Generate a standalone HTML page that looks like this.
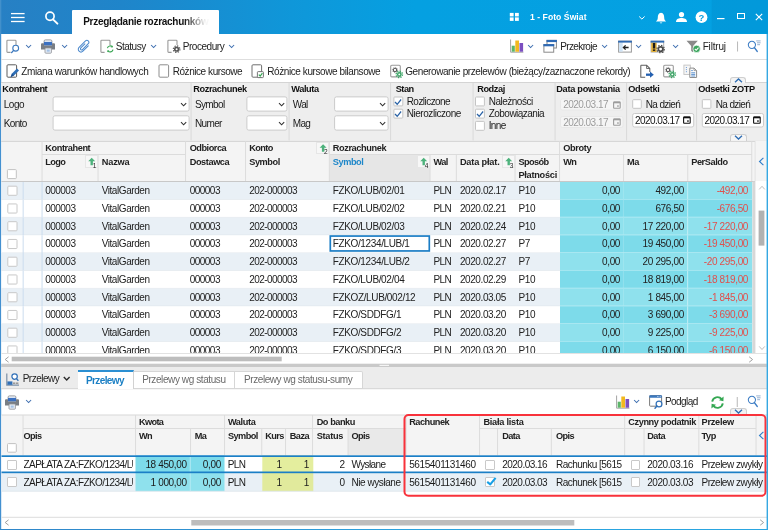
<!DOCTYPE html>
<html lang="pl"><head><meta charset="utf-8"><title>Przeglądanie rozrachunków</title>
<style>
html,body{margin:0;padding:0;}
body{width:768px;height:530px;overflow:hidden;position:relative;background:#fff;font-family:"Liberation Sans", sans-serif;font-size:10px;}
#app{position:absolute;left:0;top:0;width:768px;height:530px;overflow:hidden;background:#fff;will-change:transform;}
.a{position:absolute;box-sizing:border-box;}
.t{position:absolute;white-space:nowrap;line-height:14px;height:14px;}
</style></head>
<body>
<div id="app">
<div class="a" style="left:0px;top:0px;width:768px;height:34px;background:linear-gradient(90deg,#2780c4 0%,#1f85ca 16%,#0f97d9 38%,#05a0e1 54%,#03a1e2 100%);"></div>
<svg class="a" style="left:711px;top:0px" width="57" height="34"><rect x="0.70" y="0.00" width="56.30" height="33.60" fill="rgba(0,50,120,0.075)"/></svg>
<div class="a" style="left:72px;top:10.2px;width:146.5px;height:24px;background:#fff;border-radius:1px 1px 0 0;"></div>
<span class="t" id="t0" style="font-size:10px;color:#111;letter-spacing:-0.282px;font-weight:bold;left:83.20px;top:15px;">Przeglądanie rozrachunków</span>
<div class="a" style="left:184px;top:11px;width:34.5px;height:22px;background:linear-gradient(90deg,rgba(255,255,255,0) 0%,rgba(255,255,255,0.96) 62%,#fff 100%);"></div>
<svg class="a" style="left:11px;top:12px" width="14" height="3"><rect x="0.00" y="0.95" width="13.60" height="1.30" fill="#fff"/></svg>
<svg class="a" style="left:11px;top:16px" width="14" height="3"><rect x="0.00" y="0.85" width="13.60" height="1.30" fill="#fff"/></svg>
<svg class="a" style="left:11px;top:20px" width="14" height="3"><rect x="0.00" y="0.85" width="13.60" height="1.30" fill="#fff"/></svg>
<svg class="a" style="left:0px;top:0px" width="2" height="34"><rect x="0.00" y="0.00" width="1.30" height="34.00" fill="rgba(255,255,255,0.13)"/></svg>
<svg class="a" style="left:42px;top:10px" width="18" height="16" viewBox="0 0 18 16"><circle cx="8" cy="6.3" r="4.1" fill="none" stroke="#fff" stroke-width="1.7"/><path d="M11 9.4 L15.4 13.6" stroke="#fff" stroke-width="2" stroke-linecap="round"/></svg>
<svg class="a" style="left:509px;top:12px" width="5" height="5"><rect x="0.80" y="0.90" width="3.80" height="3.50" fill="#fff"/></svg>
<svg class="a" style="left:515px;top:12px" width="4" height="5"><rect x="0.00" y="0.90" width="3.80" height="3.50" fill="#fff"/></svg>
<svg class="a" style="left:509px;top:17px" width="5" height="4"><rect x="0.80" y="0.40" width="3.80" height="3.50" fill="#fff"/></svg>
<svg class="a" style="left:515px;top:17px" width="4" height="4"><rect x="0.00" y="0.40" width="3.80" height="3.50" fill="#fff"/></svg>
<span class="t" id="t1" style="font-size:8.6px;color:#fff;letter-spacing:0.049px;font-weight:bold;left:530.00px;top:10px;">1 - Foto Świat</span>
<svg class="a" style="left:638px;top:14.5px" width="8" height="6" viewBox="0 0 8 6"><path d="M1.2 1.5 L3.9 4.1 L6.6 1.5" fill="none" stroke="#fff" stroke-width="1"/></svg>
<svg class="a" style="left:655px;top:12px" width="12" height="13" viewBox="0 0 12 13"><path d="M6 0.8 C3.4 1.2 2.8 3.4 2.8 5.5 C2.8 7.8 2 8.6 0.9 9.6 L11.1 9.6 C10 8.6 9.2 7.8 9.2 5.5 C9.2 3.4 8.6 1.2 6 0.8 Z" fill="#fff"/><path d="M4.7 10.4 A1.4 1.4 0 0 0 7.3 10.4 Z" fill="#fff"/></svg>
<svg class="a" style="left:675px;top:11px" width="13" height="12" viewBox="0 0 13 12"><circle cx="6.5" cy="3.6" r="2.6" fill="#fff"/><path d="M1 11 C1 7.8 4 7 6.5 7 C9 7 12 7.8 12 11 Z" fill="#fff"/></svg>
<svg class="a" style="left:695px;top:11px" width="13" height="13" viewBox="0 0 13 13"><circle cx="6.5" cy="6.2" r="5.9" fill="#fff"/><text x="6.5" y="9.6" font-family="Liberation Sans, sans-serif" font-size="9.5" font-weight="bold" fill="#0a9fe0" text-anchor="middle">?</text></svg>
<svg class="a" style="left:717px;top:18px" width="8" height="2"><rect x="0.00" y="0.00" width="7.50" height="1.20" fill="#fff"/></svg>
<div class="a" style="left:736.5px;top:12.8px;width:8px;height:6.6px;border:1.2px solid #fff;"></div>
<svg class="a" style="left:755px;top:13px" width="8" height="8" viewBox="0 0 8 8"><path d="M0.8 0.8 L7.2 7.2 M7.2 0.8 L0.8 7.2" stroke="#fff" stroke-width="1.1"/></svg>
<svg class="a" style="left:0px;top:34px" width="2" height="496"><rect x="0.00" y="0.00" width="1.20" height="496.00" fill="#4390d0"/></svg>
<svg class="a" style="left:1px;top:59px" width="767" height="1"><rect x="0.00" y="0.00" width="767.00" height="1.00" fill="#dedede"/></svg>
<svg class="a" style="left:5.6px;top:39px" width="15" height="15" viewBox="0 0 15 15"><path d="M0.9 2 Q0.9 1.2 1.7 1.2 L9.2 1.2 Q10 1.2 10 2 L10 6 M0.9 2 L0.9 12.6 Q0.9 13.4 1.7 13.4 L4.6 13.4" fill="none" stroke="#9a9a9a" stroke-width="1.1"/><circle cx="9.7" cy="9.2" r="2.9" fill="#fff" stroke="#3b78be" stroke-width="1.1"/><path d="M7.6 11.4 L5.6 13.6" stroke="#3b78be" stroke-width="1.4" stroke-linecap="round"/></svg>
<svg class="a" style="left:24.8px;top:44px" width="8" height="5" viewBox="0 0 8 5"><path d="M1.1 1 L3.6 3.5 L6.1 1" fill="none" stroke="#3d6eb0" stroke-width="1.05"/></svg>
<svg class="a" style="left:40.9px;top:39.4px" width="15" height="15" viewBox="0 0 15 15"><rect x="3.1" y="0.9" width="7.8" height="4" rx="1.3" fill="#eef3f9" stroke="#8d9196" stroke-width="0.9"/><rect x="3" y="2.9" width="8" height="3.7" fill="#3b70c0"/><path d="M0 5.3 Q0 4.3 1 4.3 L3 4.3 L3 6.6 L11 6.6 L11 4.3 L13 4.3 Q14 4.3 14 5.3 L14 10.6 L0 10.6 Z" fill="#797e84"/><rect x="4" y="9" width="6.4" height="5.2" rx="0.8" fill="#e8eef6" stroke="#8d9196" stroke-width="0.8"/><rect x="5.7" y="10.5" width="3" height="2.2" fill="#a4c2e6"/></svg>
<svg class="a" style="left:60.6px;top:44px" width="8" height="5" viewBox="0 0 8 5"><path d="M1.1 1 L3.6 3.5 L6.1 1" fill="none" stroke="#3d6eb0" stroke-width="1.05"/></svg>
<svg class="a" style="left:76px;top:39px" width="16" height="15" viewBox="0 0 16 15"><g transform="translate(7.8 7.5) rotate(45)"><path d="M2.7 -3.6 L2.7 4 A2.7 2.7 0 0 1 -2.7 4 L-2.7 -5.1 A1.95 1.95 0 0 1 1.2 -5.1 L1.2 3.1 A1.15 1.15 0 0 1 -1.1 3.1 L-1.1 -2.6" fill="none" stroke="#4d8acd" stroke-width="1.05" stroke-linecap="round"/></g></svg>
<svg class="a" style="left:99.8px;top:39px" width="15" height="15" viewBox="0 0 15 15"><path d="M0.9 2 Q0.9 1.2 1.7 1.2 L9.2 1.2 Q10 1.2 10 2 L10 6 M0.9 2 L0.9 12.6 Q0.9 13.4 1.7 13.4 L4.6 13.4" fill="none" stroke="#9a9a9a" stroke-width="1.1"/><path d="M7.4 9.2 A2.9 2.9 0 0 1 12.5 8 M13 10.6 A2.9 2.9 0 0 1 7.9 11.8" fill="none" stroke="#3aa655" stroke-width="1.2"/><path d="M12.9 6.5 L12.6 8.6 L10.6 8.2 Z M7.1 13.3 L7.4 11.2 L9.4 11.6 Z" fill="#3aa655"/></svg>
<span class="t" id="t2" style="font-size:10px;color:#222;letter-spacing:-0.477px;left:115.70px;top:40px;">Statusy</span>
<svg class="a" style="left:150px;top:44px" width="8" height="5" viewBox="0 0 8 5"><path d="M1.1 1 L3.6 3.5 L6.1 1" fill="none" stroke="#3d6eb0" stroke-width="1.05"/></svg>
<svg class="a" style="left:166.6px;top:39px" width="15" height="15" viewBox="0 0 15 15"><path d="M0.9 2 Q0.9 1.2 1.7 1.2 L9.2 1.2 Q10 1.2 10 2 L10 6 M0.9 2 L0.9 12.6 Q0.9 13.4 1.7 13.4 L4.6 13.4" fill="none" stroke="#9a9a9a" stroke-width="1.1"/><circle cx="9.6" cy="10.2" r="2.6" fill="#555"/><circle cx="9.6" cy="10.2" r="3.3" fill="none" stroke="#555" stroke-width="1.2" stroke-dasharray="1.3 1.3"/><circle cx="9.6" cy="10.2" r="1" fill="#fff"/></svg>
<span class="t" id="t3" style="font-size:10px;color:#222;letter-spacing:-0.447px;left:182.70px;top:40px;">Procedury</span>
<svg class="a" style="left:228.4px;top:44px" width="8" height="5" viewBox="0 0 8 5"><path d="M1.1 1 L3.6 3.5 L6.1 1" fill="none" stroke="#3d6eb0" stroke-width="1.05"/></svg>
<svg class="a" style="left:510px;top:39.3px" width="14" height="14" viewBox="0 0 14 14"><path d="M0.6 0.5 L0.6 13.2 L13.4 13.2" fill="none" stroke="#a4a4a4" stroke-width="1"/><rect x="1.7" y="6.7" width="3.1" height="6" fill="#5db56a"/><rect x="5.3" y="1.5" width="3.7" height="11.2" fill="#f2b81f"/><rect x="9.5" y="4" width="3.6" height="8.7" fill="#7b4fc0"/></svg>
<svg class="a" style="left:526.8px;top:44px" width="8" height="5" viewBox="0 0 8 5"><path d="M1.1 1 L3.6 3.5 L6.1 1" fill="none" stroke="#3d6eb0" stroke-width="1.05"/></svg>
<svg class="a" style="left:543px;top:39px" width="15" height="14" viewBox="0 0 15 14"><rect x="4" y="1.4" width="9.4" height="7.6" fill="#fff" stroke="#8a8a8a" stroke-width="1"/><rect x="3.5" y="0.9" width="10.4" height="2.2" fill="#2f6ab4"/><rect x="0.9" y="5.6" width="9.8" height="7.6" fill="#fff" stroke="#8a8a8a" stroke-width="1"/><rect x="0.4" y="5.1" width="10.8" height="2.2" fill="#2f6ab4"/></svg>
<span class="t" id="t4" style="font-size:10px;color:#222;letter-spacing:-0.620px;left:560.20px;top:40px;">Przekroje</span>
<svg class="a" style="left:601.3px;top:44px" width="8" height="5" viewBox="0 0 8 5"><path d="M1.1 1 L3.6 3.5 L6.1 1" fill="none" stroke="#3d6eb0" stroke-width="1.05"/></svg>
<svg class="a" style="left:618px;top:40px" width="15" height="13" viewBox="0 0 15 13"><rect x="0.6" y="1.2" width="12.8" height="10.9" fill="#fff" stroke="#9a9a9a" stroke-width="1"/><rect x="1.1" y="2.4" width="3.6" height="9.2" fill="#cfe3f5"/><rect x="0.1" y="0.7" width="13.8" height="1.9" fill="#2f6ab4"/><path d="M10.6 7.5 L5.6 7.5 M7.6 5.4 L5.4 7.5 L7.6 9.6" fill="none" stroke="#222" stroke-width="1.3"/></svg>
<svg class="a" style="left:635px;top:44px" width="8" height="5" viewBox="0 0 8 5"><path d="M1.1 1 L3.6 3.5 L6.1 1" fill="none" stroke="#3d6eb0" stroke-width="1.05"/></svg>
<svg class="a" style="left:650px;top:40px" width="16" height="14" viewBox="0 0 16 14"><rect x="1.1" y="1.2" width="12.6" height="10.9" fill="#fff" stroke="#a8a8a8" stroke-width="0.9"/><rect x="1.2" y="2.4" width="5.5" height="9.6" fill="#e2b13c"/><rect x="0.6" y="0.7" width="13.6" height="1.9" fill="#2f6ab4"/><rect x="2.9" y="3" width="2.3" height="5.5" fill="#1a1a1a"/><rect x="2.9" y="9.4" width="2.3" height="1.5" fill="#1a1a1a"/><circle cx="10.6" cy="9.1" r="2.3" fill="#fff" stroke="#4a4a4a" stroke-width="1.7"/><circle cx="10.6" cy="9.1" r="3.7" fill="none" stroke="#4a4a4a" stroke-width="1.1" stroke-dasharray="1.45 1.45"/></svg>
<svg class="a" style="left:672px;top:44px" width="8" height="5" viewBox="0 0 8 5"><path d="M1.1 1 L3.6 3.5 L6.1 1" fill="none" stroke="#3d6eb0" stroke-width="1.05"/></svg>
<svg class="a" style="left:686px;top:40px" width="16" height="14" viewBox="0 0 16 14"><path d="M0.5 0.8 L11.8 0.8 L7.1 5.9 L7.1 12.2 L5.2 11 L5.2 5.9 Z" fill="#8a8a8a"/><circle cx="10.6" cy="8.9" r="3.7" fill="#3aa55d" stroke="#fff" stroke-width="0.7"/><path d="M8.8 8.9 L10.2 10.3 L12.5 7.6" fill="none" stroke="#fff" stroke-width="1.1"/></svg>
<span class="t" id="t5" style="font-size:10px;color:#222;letter-spacing:-0.192px;left:702.70px;top:40px;">Filtruj</span>
<svg class="a" style="left:737px;top:41px" width="2" height="11"><rect x="0.05" y="0.50" width="1.00" height="10.00" fill="#b8b8b8"/></svg>
<svg class="a" style="left:747px;top:40px" width="15" height="13" viewBox="0 0 15 13"><circle cx="4.9" cy="4.8" r="3.6" fill="#fff" stroke="#3b7cc4" stroke-width="1.05"/><path d="M7.4 7.6 L10.2 11.4" stroke="#3b7cc4" stroke-width="1.5" stroke-linecap="round"/><path d="M9.2 0.9 L13.6 0.9 M10 2.8 L13.6 2.8 M10.2 4.7 L13 4.7" stroke="#8aa7c9" stroke-width="0.9"/></svg>
<svg class="a" style="left:1px;top:82px" width="767" height="1"><rect x="0.00" y="0.00" width="767.00" height="1.00" fill="#d4d4d4"/></svg>
<svg class="a" style="left:5.6px;top:64.4px" width="14" height="15" viewBox="0 0 14 15"><rect x="1" y="0.8" width="9.6" height="12.4" rx="1" fill="#fff" stroke="#5c5c5c" stroke-width="1"/><path d="M5 12.6 L6 9.6 L11 4.6 L13 6.6 L8 11.6 Z" fill="#2f6fb7"/><path d="M4.4 13.4 L6 9.6 L8 11.6 Z" fill="#1d4f8f"/></svg>
<span class="t" id="t6" style="font-size:10px;color:#222;letter-spacing:-0.369px;left:21.20px;top:65px;">Zmiana warunków handlowych</span>
<svg class="a" style="left:157.6px;top:64.4px" width="14" height="15" viewBox="0 0 14 15"><rect x="1" y="0.8" width="9.6" height="12.4" rx="1" fill="#fff" stroke="#8e8e8e" stroke-width="1"/></svg>
<span class="t" id="t7" style="font-size:10px;color:#222;letter-spacing:-0.440px;left:172.70px;top:65px;">Różnice kursowe</span>
<svg class="a" style="left:251.4px;top:64.4px" width="14" height="15" viewBox="0 0 14 15"><rect x="1" y="0.8" width="9.6" height="12.4" rx="1" fill="#fff" stroke="#6e6e6e" stroke-width="1"/><rect x="6.4" y="7.6" width="6" height="6" rx="0.8" fill="#fff" stroke="#666" stroke-width="0.9"/><path d="M7.8 10.6 L9.2 12 L11.4 9.2" fill="none" stroke="#35a853" stroke-width="1.2"/></svg>
<span class="t" id="t8" style="font-size:10px;color:#222;letter-spacing:-0.413px;left:267.20px;top:65px;">Różnice kursowe bilansowe</span>
<svg class="a" style="left:390.1px;top:64px" width="15" height="15" viewBox="0 0 15 15"><rect x="0.7" y="1.3" width="9.6" height="11.6" rx="1.1" fill="#fff" stroke="#9a9a9a" stroke-width="1.1"/><circle cx="5" cy="6" r="1.7" fill="none" stroke="#555" stroke-width="1.1"/><circle cx="5" cy="6" r="2.6" fill="none" stroke="#666" stroke-width="0.8" stroke-dasharray="0.9 1.15"/><circle cx="9.3" cy="10.4" r="2.4" fill="#3aa565"/><circle cx="9.3" cy="10.4" r="3.2" fill="none" stroke="#3aa565" stroke-width="1.3" stroke-dasharray="1.3 1.2"/><circle cx="9.3" cy="10.4" r="0.95" fill="#fff"/></svg>
<span class="t" id="t9" style="font-size:10px;color:#222;letter-spacing:-0.401px;left:405.20px;top:65px;">Generowanie przelewów (bieżący/zaznaczone rekordy)</span>
<svg class="a" style="left:640px;top:64px" width="15" height="15" viewBox="0 0 15 15"><path d="M0.8 1.3 L6.6 1.3 L9.8 4.5 L9.8 8 M0.8 1.3 L0.8 13.2 L5.2 13.2" fill="none" stroke="#5e5e5e" stroke-width="1.05"/><path d="M6.6 1.3 L6.6 4.5 L9.8 4.5" fill="none" stroke="#5e5e5e" stroke-width="0.9"/><path d="M6 10.7 L11.4 10.7" stroke="#2460b0" stroke-width="2.3"/><path d="M10 7.6 L13.8 10.7 L10 13.8 Z" fill="#2460b0"/></svg>
<svg class="a" style="left:663px;top:64px" width="15" height="15" viewBox="0 0 15 15"><rect x="0.7" y="1.3" width="9.6" height="11.6" rx="1.1" fill="#fff" stroke="#9a9a9a" stroke-width="1.1"/><circle cx="5" cy="6" r="1.7" fill="none" stroke="#555" stroke-width="1.1"/><circle cx="5" cy="6" r="2.6" fill="none" stroke="#666" stroke-width="0.8" stroke-dasharray="0.9 1.15"/><circle cx="9.3" cy="10.4" r="2.4" fill="#3aa565"/><circle cx="9.3" cy="10.4" r="3.2" fill="none" stroke="#3aa565" stroke-width="1.3" stroke-dasharray="1.3 1.2"/><circle cx="9.3" cy="10.4" r="0.95" fill="#fff"/></svg>
<svg class="a" style="left:683px;top:64px" width="15" height="15" viewBox="0 0 15 15"><rect x="0.9" y="1.1" width="6.4" height="9.4" fill="#f6f6f6" stroke="#c4c4c4" stroke-width="0.9"/><path d="M3.4 3 L3.4 9" stroke="#6d9bd4" stroke-width="1" stroke-dasharray="1 1.1"/><path d="M6.8 4.1 L11 4.1 L13.6 6.6 L13.6 13.5 L6.8 13.5 Z" fill="#fff" stroke="#8e8e8e" stroke-width="1"/><path d="M11 4.1 L11 6.6 L13.6 6.6" fill="none" stroke="#8e8e8e" stroke-width="0.8"/><path d="M8.2 8.8 L12.2 8.8 M8.2 10.4 L12.2 10.4 M8.2 12 L12.2 12" stroke="#4d86c8" stroke-width="0.9"/><path d="M8.2 6.6 L9.8 6.6" stroke="#4d86c8" stroke-width="0.9"/></svg>
<div class="a" style="left:730px;top:76.5px;width:16px;height:8px;background:#f4f4f4;border:1px solid #cfcfcf;border-radius:3px 3px 0 0;border-bottom:none;"></div>
<svg class="a" style="left:733.5px;top:78px" width="9" height="5" viewBox="0 0 9 5"><path d="M1 4.2 L4.5 1 L8 4.2" fill="none" stroke="#2d6cb3" stroke-width="1.3"/></svg>
<svg class="a" style="left:1px;top:83px" width="767" height="58"><rect x="0.20" y="0.00" width="766.00" height="58.00" fill="#eeeeee"/></svg>
<svg class="a" style="left:190px;top:83px" width="2" height="58"><rect x="0.55" y="0.00" width="1.00" height="57.50" fill="#dadada"/></svg>
<svg class="a" style="left:288px;top:83px" width="2" height="58"><rect x="0.55" y="0.00" width="1.00" height="57.50" fill="#dadada"/></svg>
<svg class="a" style="left:390px;top:83px" width="2" height="58"><rect x="0.05" y="0.00" width="1.00" height="57.50" fill="#dadada"/></svg>
<svg class="a" style="left:472px;top:83px" width="2" height="58"><rect x="0.55" y="0.00" width="1.00" height="57.50" fill="#dadada"/></svg>
<svg class="a" style="left:554px;top:83px" width="2" height="58"><rect x="0.55" y="0.00" width="1.00" height="57.50" fill="#dadada"/></svg>
<svg class="a" style="left:626px;top:83px" width="2" height="58"><rect x="0.05" y="0.00" width="1.00" height="57.50" fill="#dadada"/></svg>
<svg class="a" style="left:696px;top:83px" width="2" height="58"><rect x="0.05" y="0.00" width="1.00" height="57.50" fill="#dadada"/></svg>
<span class="t" id="t10" style="font-size:9.2px;color:#111;letter-spacing:-0.389px;font-weight:bold;left:2.20px;top:82px;">Kontrahent</span>
<span class="t" id="t11" style="font-size:9.2px;color:#111;letter-spacing:-0.370px;font-weight:bold;left:193.20px;top:82px;">Rozrachunek</span>
<span class="t" id="t12" style="font-size:9.2px;color:#111;letter-spacing:-0.356px;font-weight:bold;left:291.20px;top:82px;">Waluta</span>
<span class="t" id="t13" style="font-size:9.2px;color:#111;letter-spacing:-0.474px;font-weight:bold;left:395.70px;top:82px;">Stan</span>
<span class="t" id="t14" style="font-size:9.2px;color:#111;letter-spacing:-0.425px;font-weight:bold;left:477.20px;top:82px;">Rodzaj</span>
<span class="t" id="t15" style="font-size:9.2px;color:#111;letter-spacing:-0.261px;font-weight:bold;left:556.20px;top:82px;">Data powstania</span>
<span class="t" id="t16" style="font-size:9.2px;color:#111;letter-spacing:-0.367px;font-weight:bold;left:628.20px;top:82px;">Odsetki</span>
<span class="t" id="t17" style="font-size:9.2px;color:#111;letter-spacing:-0.342px;font-weight:bold;left:698.20px;top:82px;">Odsetki ZOTP</span>
<svg class="a" style="left:52px;top:96px" width="139" height="17"><rect x="1.10" y="0.90" width="136.00" height="14.20" rx="1.8" fill="#fff" stroke="#cbcbcb" stroke-width="1"/></svg>
<svg class="a" style="left:180.0px;top:101.9px" width="8" height="5" viewBox="0 0 8 5"><path d="M1 1.2 L3.6 3.8 L6.2 1.2" fill="none" stroke="#333" stroke-width="1.1"/></svg>
<svg class="a" style="left:52px;top:115px" width="139" height="17"><rect x="1.10" y="0.80" width="136.00" height="14.30" rx="1.8" fill="#fff" stroke="#cbcbcb" stroke-width="1"/></svg>
<svg class="a" style="left:180.0px;top:120.8px" width="8" height="5" viewBox="0 0 8 5"><path d="M1 1.2 L3.6 3.8 L6.2 1.2" fill="none" stroke="#333" stroke-width="1.1"/></svg>
<span class="t" id="t18" style="font-size:10px;color:#1a1a1a;letter-spacing:-0.417px;left:3.70px;top:98px;">Logo</span>
<span class="t" id="t19" style="font-size:10px;color:#1a1a1a;letter-spacing:-0.620px;left:3.70px;top:117px;">Konto</span>
<svg class="a" style="left:246px;top:96px" width="43" height="17"><rect x="0.90" y="0.90" width="40.00" height="14.20" rx="1.8" fill="#fff" stroke="#cbcbcb" stroke-width="1"/></svg>
<svg class="a" style="left:277.79999999999995px;top:101.9px" width="8" height="5" viewBox="0 0 8 5"><path d="M1 1.2 L3.6 3.8 L6.2 1.2" fill="none" stroke="#333" stroke-width="1.1"/></svg>
<svg class="a" style="left:246px;top:115px" width="43" height="17"><rect x="0.90" y="0.80" width="40.00" height="14.30" rx="1.8" fill="#fff" stroke="#cbcbcb" stroke-width="1"/></svg>
<svg class="a" style="left:277.79999999999995px;top:120.8px" width="8" height="5" viewBox="0 0 8 5"><path d="M1 1.2 L3.6 3.8 L6.2 1.2" fill="none" stroke="#333" stroke-width="1.1"/></svg>
<span class="t" id="t20" style="font-size:10px;color:#1a1a1a;letter-spacing:-0.620px;left:194.90px;top:98px;">Symbol</span>
<span class="t" id="t21" style="font-size:10px;color:#1a1a1a;letter-spacing:-0.620px;left:194.90px;top:117px;">Numer</span>
<svg class="a" style="left:334px;top:96px" width="56" height="17"><rect x="0.60" y="0.90" width="53.50" height="14.20" rx="1.8" fill="#fff" stroke="#cbcbcb" stroke-width="1"/></svg>
<svg class="a" style="left:379.0px;top:101.9px" width="8" height="5" viewBox="0 0 8 5"><path d="M1 1.2 L3.6 3.8 L6.2 1.2" fill="none" stroke="#333" stroke-width="1.1"/></svg>
<svg class="a" style="left:334px;top:115px" width="56" height="17"><rect x="0.60" y="0.80" width="53.50" height="14.30" rx="1.8" fill="#fff" stroke="#cbcbcb" stroke-width="1"/></svg>
<svg class="a" style="left:379.0px;top:120.8px" width="8" height="5" viewBox="0 0 8 5"><path d="M1 1.2 L3.6 3.8 L6.2 1.2" fill="none" stroke="#333" stroke-width="1.1"/></svg>
<span class="t" id="t22" style="font-size:10px;color:#1a1a1a;letter-spacing:-0.620px;left:292.70px;top:98px;">Wal</span>
<span class="t" id="t23" style="font-size:10px;color:#1a1a1a;letter-spacing:-0.620px;left:292.70px;top:117px;">Mag</span>
<svg class="a" style="left:393px;top:96px" width="12" height="12"><rect x="0.90" y="1.00" width="8.90" height="8.90" rx="0.8" fill="#fff" stroke="#c4c4c4" stroke-width="1"/></svg>
<svg class="a" style="left:393.4px;top:96.5px" width="10" height="10" viewBox="0 0 10 10"><path d="M2 5 L4.2 7.3 L8.1 2.5" fill="none" stroke="#2b63a6" stroke-width="1.25"/></svg>
<svg class="a" style="left:393px;top:108px" width="12" height="12"><rect x="0.90" y="1.20" width="8.90" height="8.90" rx="0.8" fill="#fff" stroke="#c4c4c4" stroke-width="1"/></svg>
<svg class="a" style="left:393.4px;top:108.7px" width="10" height="10" viewBox="0 0 10 10"><path d="M2 5 L4.2 7.3 L8.1 2.5" fill="none" stroke="#2b63a6" stroke-width="1.25"/></svg>
<span class="t" id="t24" style="font-size:10px;color:#1a1a1a;letter-spacing:-0.547px;left:406.70px;top:95px;">Rozliczone</span>
<span class="t" id="t25" style="font-size:10px;color:#1a1a1a;letter-spacing:-0.444px;left:406.70px;top:107px;">Nierozliczone</span>
<svg class="a" style="left:475px;top:96px" width="11" height="12"><rect x="0.50" y="1.00" width="8.90" height="8.90" rx="0.8" fill="#fff" stroke="#c4c4c4" stroke-width="1"/></svg>
<svg class="a" style="left:475px;top:108px" width="11" height="12"><rect x="0.50" y="1.20" width="8.90" height="8.90" rx="0.8" fill="#fff" stroke="#c4c4c4" stroke-width="1"/></svg>
<svg class="a" style="left:475px;top:108.7px" width="10" height="10" viewBox="0 0 10 10"><path d="M2 5 L4.2 7.3 L8.1 2.5" fill="none" stroke="#2b63a6" stroke-width="1.25"/></svg>
<svg class="a" style="left:475px;top:120px" width="11" height="12"><rect x="0.50" y="1.40" width="8.90" height="8.90" rx="0.8" fill="#fff" stroke="#c4c4c4" stroke-width="1"/></svg>
<span class="t" id="t26" style="font-size:10px;color:#1a1a1a;letter-spacing:-0.491px;left:488.70px;top:95px;">Należności</span>
<span class="t" id="t27" style="font-size:10px;color:#1a1a1a;letter-spacing:-0.520px;left:488.70px;top:107px;">Zobowiązania</span>
<span class="t" id="t28" style="font-size:10px;color:#1a1a1a;letter-spacing:-0.620px;left:488.70px;top:119px;">Inne</span>
<svg class="a" style="left:560px;top:98px" width="65" height="14"><rect x="0.50" y="1.00" width="62.50" height="11.00" rx="1.8" fill="#f5f5f5" stroke="#e8e8e8" stroke-width="1"/></svg>
<span class="t" id="t29" style="font-size:10px;color:#9c9c9c;letter-spacing:-0.529px;left:563.20px;top:98px;">2020.03.17</span>
<svg class="a" style="left:613.0px;top:100.5px" width="8" height="8" viewBox="0 0 8 8"><rect x="0.6" y="1" width="6.6" height="6.2" rx="0.7" fill="none" stroke="#9c9c9c" stroke-width="1.1"/><rect x="0.6" y="0.6" width="6.6" height="1.7" fill="#9c9c9c"/><rect x="4.2" y="4.3" width="1.5" height="1.5" fill="#9c9c9c"/></svg>
<svg class="a" style="left:560px;top:116px" width="65" height="13"><rect x="0.50" y="0.50" width="62.50" height="11.00" rx="1.8" fill="#f5f5f5" stroke="#e8e8e8" stroke-width="1"/></svg>
<span class="t" id="t30" style="font-size:10px;color:#9c9c9c;letter-spacing:-0.529px;left:563.20px;top:116px;">2020.03.17</span>
<svg class="a" style="left:613.0px;top:118.0px" width="8" height="8" viewBox="0 0 8 8"><rect x="0.6" y="1" width="6.6" height="6.2" rx="0.7" fill="none" stroke="#9c9c9c" stroke-width="1.1"/><rect x="0.6" y="0.6" width="6.6" height="1.7" fill="#9c9c9c"/><rect x="4.2" y="4.3" width="1.5" height="1.5" fill="#9c9c9c"/></svg>
<svg class="a" style="left:632px;top:99px" width="11" height="11"><rect x="0.70" y="0.70" width="8.60" height="8.60" rx="0.8" fill="#fff" stroke="#c4c4c4" stroke-width="1"/></svg>
<span class="t" id="t31" style="font-size:10px;color:#1a1a1a;letter-spacing:-0.620px;left:645.70px;top:98px;">Na dzień</span>
<svg class="a" style="left:632px;top:113px" width="64" height="16"><rect x="0.70" y="0.50" width="61.00" height="13.50" rx="1.8" fill="#fff" stroke="#cbcbcb" stroke-width="1"/></svg>
<span class="t" id="t32" style="font-size:10px;color:#111;letter-spacing:-0.529px;left:634.90px;top:114px;">2020.03.17</span>
<svg class="a" style="left:682.9000000000001px;top:116.35px" width="8" height="8" viewBox="0 0 8 8"><rect x="0.6" y="1" width="6.6" height="6.2" rx="0.7" fill="none" stroke="#111" stroke-width="1.1"/><rect x="0.6" y="0.6" width="6.6" height="1.7" fill="#111"/><rect x="4.2" y="4.3" width="1.5" height="1.5" fill="#111"/></svg>
<svg class="a" style="left:701px;top:99px" width="12" height="11"><rect x="1.30" y="0.70" width="8.60" height="8.60" rx="0.8" fill="#fff" stroke="#c4c4c4" stroke-width="1"/></svg>
<span class="t" id="t33" style="font-size:10px;color:#1a1a1a;letter-spacing:-0.620px;left:715.70px;top:98px;">Na dzień</span>
<svg class="a" style="left:701px;top:113px" width="64" height="16"><rect x="1.30" y="0.50" width="61.20" height="13.50" rx="1.8" fill="#fff" stroke="#cbcbcb" stroke-width="1"/></svg>
<span class="t" id="t34" style="font-size:10px;color:#111;letter-spacing:-0.529px;left:704.50px;top:114px;">2020.03.17</span>
<svg class="a" style="left:752.7px;top:116.35px" width="8" height="8" viewBox="0 0 8 8"><rect x="0.6" y="1" width="6.6" height="6.2" rx="0.7" fill="none" stroke="#111" stroke-width="1.1"/><rect x="0.6" y="0.6" width="6.6" height="1.7" fill="#111"/><rect x="4.2" y="4.3" width="1.5" height="1.5" fill="#111"/></svg>
<div class="a" style="left:729.5px;top:133.5px;width:17px;height:8px;background:#f6f6f6;border:1px solid #cfcfcf;border-radius:3px 3px 0 0;border-bottom:none;"></div>
<svg class="a" style="left:733.5px;top:135.3px" width="9" height="5" viewBox="0 0 9 5"><path d="M1 0.8 L4.5 4 L8 0.8" fill="none" stroke="#2d6cb3" stroke-width="1.3"/></svg>
<svg class="a" style="left:1px;top:141px" width="755" height="40"><rect x="0.50" y="0.00" width="754.00" height="40.00" fill="#f4f4f4"/></svg>
<svg class="a" style="left:1px;top:140px" width="767" height="2"><rect x="0.20" y="0.90" width="766.00" height="1.00" fill="#d4d4d4"/></svg>
<svg class="a" style="left:329px;top:154px" width="101" height="27"><rect x="0.50" y="0.50" width="100.50" height="26.50" fill="#e6e6e6"/></svg>
<svg class="a" style="left:42px;top:154px" width="144" height="1"><rect x="0.00" y="0.00" width="143.50" height="1.00" fill="#dcdcdc"/></svg>
<svg class="a" style="left:329px;top:154px" width="231" height="1"><rect x="0.50" y="0.00" width="230.00" height="1.00" fill="#dcdcdc"/></svg>
<svg class="a" style="left:560px;top:154px" width="192" height="1"><rect x="0.00" y="0.00" width="192.00" height="1.00" fill="#dcdcdc"/></svg>
<svg class="a" style="left:22px;top:181px" width="2" height="1"><rect x="0.55" y="0.00" width="1.00" height="0.00" fill="#dcdcdc"/></svg>
<svg class="a" style="left:41px;top:141px" width="2" height="40"><rect x="0.55" y="0.00" width="1.00" height="40.00" fill="#dcdcdc"/></svg>
<svg class="a" style="left:97px;top:154px" width="2" height="27"><rect x="0.55" y="0.00" width="1.00" height="27.00" fill="#dcdcdc"/></svg>
<svg class="a" style="left:185px;top:141px" width="2" height="40"><rect x="0.05" y="0.00" width="1.00" height="40.00" fill="#dcdcdc"/></svg>
<svg class="a" style="left:245px;top:141px" width="2" height="40"><rect x="0.05" y="0.00" width="1.00" height="40.00" fill="#dcdcdc"/></svg>
<svg class="a" style="left:328px;top:141px" width="2" height="40"><rect x="0.85" y="0.00" width="1.00" height="40.00" fill="#dcdcdc"/></svg>
<svg class="a" style="left:429px;top:154px" width="2" height="27"><rect x="0.55" y="0.00" width="1.00" height="27.00" fill="#dcdcdc"/></svg>
<svg class="a" style="left:455px;top:154px" width="2" height="27"><rect x="0.85" y="0.00" width="1.00" height="27.00" fill="#dcdcdc"/></svg>
<svg class="a" style="left:514px;top:154px" width="2" height="27"><rect x="0.55" y="0.00" width="1.00" height="27.00" fill="#dcdcdc"/></svg>
<svg class="a" style="left:559px;top:141px" width="2" height="40"><rect x="0.05" y="0.00" width="1.00" height="40.00" fill="#dcdcdc"/></svg>
<svg class="a" style="left:623px;top:154px" width="2" height="27"><rect x="0.05" y="0.00" width="1.00" height="27.00" fill="#dcdcdc"/></svg>
<svg class="a" style="left:687px;top:154px" width="2" height="27"><rect x="0.25" y="0.00" width="1.00" height="27.00" fill="#dcdcdc"/></svg>
<svg class="a" style="left:751px;top:141px" width="2" height="40"><rect x="0.25" y="0.00" width="1.00" height="40.00" fill="#dcdcdc"/></svg>
<svg class="a" style="left:754px;top:141px" width="2" height="40"><rect x="0.85" y="0.00" width="1.00" height="40.00" fill="#dcdcdc"/></svg>
<svg class="a" style="left:1px;top:181px" width="755" height="1"><rect x="0.50" y="0.00" width="754.00" height="1.00" fill="#c8c8c8"/></svg>
<span class="t" id="t35" style="font-size:9.2px;color:#222;letter-spacing:-0.389px;font-weight:bold;left:45.20px;top:141px;">Kontrahent</span>
<span class="t" id="t36" style="font-size:9.2px;color:#222;letter-spacing:-0.620px;font-weight:bold;left:45.20px;top:155px;">Logo</span>
<span class="t" id="t37" style="font-size:9.2px;color:#222;letter-spacing:-0.152px;font-weight:bold;left:101.70px;top:155px;">Nazwa</span>
<span class="t" id="t38" style="font-size:9.2px;color:#222;letter-spacing:-0.478px;font-weight:bold;left:189.70px;top:141px;">Odbiorca</span>
<span class="t" id="t39" style="font-size:9.2px;color:#222;letter-spacing:-0.415px;font-weight:bold;left:189.70px;top:155px;">Dostawca</span>
<span class="t" id="t40" style="font-size:9.2px;color:#222;letter-spacing:-0.583px;font-weight:bold;left:249.20px;top:141px;">Konto</span>
<span class="t" id="t41" style="font-size:9.2px;color:#222;letter-spacing:-0.438px;font-weight:bold;left:249.20px;top:155px;">Symbol</span>
<span class="t" id="t42" style="font-size:9.2px;color:#222;letter-spacing:-0.370px;font-weight:bold;left:332.70px;top:141px;">Rozrachunek</span>
<span class="t" id="t43" style="font-size:9.2px;color:#1e87c9;letter-spacing:-0.398px;font-weight:bold;left:332.70px;top:155px;">Symbol</span>
<span class="t" id="t44" style="font-size:9.2px;color:#222;letter-spacing:-0.500px;font-weight:bold;left:433.40px;top:155px;">Wal</span>
<span class="t" id="t45" style="font-size:9.2px;color:#222;letter-spacing:-0.173px;font-weight:bold;left:459.90px;top:155px;">Data płat.</span>
<span class="t" id="t46" style="font-size:9.2px;color:#222;letter-spacing:-0.577px;font-weight:bold;left:518.40px;top:155px;">Sposób</span>
<span class="t" id="t47" style="font-size:9.2px;color:#222;letter-spacing:-0.257px;font-weight:bold;left:518.40px;top:168px;">Płatności</span>
<span class="t" id="t48" style="font-size:9.2px;color:#222;letter-spacing:-0.325px;font-weight:bold;left:563.20px;top:141px;">Obroty</span>
<span class="t" id="t49" style="font-size:9.2px;color:#222;letter-spacing:-0.620px;font-weight:bold;left:563.20px;top:155px;">Wn</span>
<span class="t" id="t50" style="font-size:9.2px;color:#222;letter-spacing:-0.266px;font-weight:bold;left:626.90px;top:155px;">Ma</span>
<span class="t" id="t51" style="font-size:9.2px;color:#222;letter-spacing:-0.404px;font-weight:bold;left:691.20px;top:155px;">PerSaldo</span>
<div class="a" style="left:84.5px;top:155.3px;width:13.5px;height:12.7px;background:#f7f7f7;border:1px solid #e6e6e6;"></div>
<svg class="a" style="left:87px;top:157px" width="10" height="10" viewBox="0 0 10 10"><path transform="translate(1.20 0.80)" d="M3.5 0 L7 3.5 L4.7 3.5 L4.7 7.5 L2.3 7.5 L2.3 3.5 L0 3.5 Z" fill="#4db27c"/></svg>
<span class="t" id="t52" style="font-size:6.5px;color:#222;letter-spacing:-0.360px;left:92.70px;top:159px;">1</span>
<div class="a" style="left:315.9px;top:141.8px;width:13.5px;height:12.7px;background:#f7f7f7;border:1px solid #e6e6e6;"></div>
<svg class="a" style="left:318px;top:143px" width="10" height="10" viewBox="0 0 10 10"><path transform="translate(1.60 1.30)" d="M3.5 0 L7 3.5 L4.7 3.5 L4.7 7.5 L2.3 7.5 L2.3 3.5 L0 3.5 Z" fill="#4db27c"/></svg>
<span class="t" id="t53" style="font-size:6.5px;color:#222;letter-spacing:-0.360px;left:324.10px;top:145px;">2</span>
<div class="a" style="left:416.5px;top:155.3px;width:13.5px;height:12.7px;background:#f7f7f7;border:1px solid #e6e6e6;"></div>
<svg class="a" style="left:419px;top:157px" width="10" height="10" viewBox="0 0 10 10"><path transform="translate(1.20 0.80)" d="M3.5 0 L7 3.5 L4.7 3.5 L4.7 7.5 L2.3 7.5 L2.3 3.5 L0 3.5 Z" fill="#4db27c"/></svg>
<span class="t" id="t54" style="font-size:6.5px;color:#222;letter-spacing:-0.360px;left:424.70px;top:159px;">4</span>
<div class="a" style="left:501.5px;top:155.3px;width:13.5px;height:12.7px;background:#f7f7f7;border:1px solid #e6e6e6;"></div>
<svg class="a" style="left:504px;top:157px" width="10" height="10" viewBox="0 0 10 10"><path transform="translate(1.20 0.80)" d="M3.5 0 L7 3.5 L4.7 3.5 L4.7 7.5 L2.3 7.5 L2.3 3.5 L0 3.5 Z" fill="#4db27c"/></svg>
<span class="t" id="t55" style="font-size:6.5px;color:#222;letter-spacing:-0.360px;left:509.70px;top:159px;">3</span>
<svg class="a" style="left:758px;top:156.8px" width="7" height="9" viewBox="0 0 7 9"><path d="M5.4 0.9 L1.5 4.5 L5.4 8.1" fill="none" stroke="#2d7cc8" stroke-width="1.1"/></svg>
<svg class="a" style="left:6px;top:169px" width="12" height="12"><rect x="1.40" y="0.60" width="8.90" height="9.00" rx="0.8" fill="#fff" stroke="#c2c2c2" stroke-width="1"/></svg>
<div class="a" style="left:0;top:181.7px;width:768px;height:171.3px;overflow:hidden;">
<svg class="a" style="left:1px;top:0px" width="559" height="18"><rect x="0.50" y="0.00" width="558.50" height="17.75" fill="#e9f0f6"/></svg>
<svg class="a" style="left:1px;top:17px" width="559" height="2"><rect x="0.50" y="0.15" width="558.50" height="1.00" fill="#dde5ec"/></svg>
<svg class="a" style="left:560px;top:0px" width="193" height="18"><rect x="0.00" y="0.00" width="192.30" height="17.75" fill="#8fe1ed"/></svg>
<svg class="a" style="left:622px;top:0px" width="2" height="18"><rect x="0.95" y="0.00" width="0.80" height="17.75" fill="#a4e6f0"/></svg>
<svg class="a" style="left:687px;top:0px" width="2" height="18"><rect x="0.15" y="0.00" width="1.00" height="17.75" fill="#c4eef5"/></svg>
<svg class="a" style="left:560px;top:16px" width="193" height="2"><rect x="0.00" y="0.95" width="192.30" height="0.90" fill="#b4eaf3"/></svg>
<svg class="a" style="left:22px;top:0px" width="2" height="18"><rect x="0.65" y="0.00" width="1.00" height="17.75" fill="#cbdcee"/></svg>
<svg class="a" style="left:41px;top:0px" width="2" height="18"><rect x="0.55" y="0.00" width="1.00" height="17.75" fill="#cbdcee"/></svg>
<svg class="a" style="left:7px;top:3px" width="12" height="12"><rect x="0.80" y="1.20" width="9.20" height="9.10" rx="0.8" fill="#fff" stroke="#c8c8c8" stroke-width="1"/></svg>
<svg class="a" style="left:1px;top:17px" width="559" height="19"><rect x="0.50" y="0.75" width="558.50" height="17.75" fill="#ffffff"/></svg>
<svg class="a" style="left:1px;top:34px" width="559" height="2"><rect x="0.50" y="0.90" width="558.50" height="1.00" fill="#e6ebf0"/></svg>
<svg class="a" style="left:560px;top:17px" width="193" height="19"><rect x="0.00" y="0.75" width="192.30" height="17.75" fill="#7ddbea"/></svg>
<svg class="a" style="left:622px;top:17px" width="2" height="19"><rect x="0.95" y="0.75" width="0.80" height="17.75" fill="#98e2ee"/></svg>
<svg class="a" style="left:687px;top:17px" width="2" height="19"><rect x="0.15" y="0.75" width="1.00" height="17.75" fill="#c4eef5"/></svg>
<svg class="a" style="left:560px;top:34px" width="193" height="2"><rect x="0.00" y="0.70" width="192.30" height="0.90" fill="#b4eaf3"/></svg>
<svg class="a" style="left:22px;top:17px" width="2" height="19"><rect x="0.65" y="0.75" width="1.00" height="17.75" fill="#cbdcee"/></svg>
<svg class="a" style="left:41px;top:17px" width="2" height="19"><rect x="0.55" y="0.75" width="1.00" height="17.75" fill="#cbdcee"/></svg>
<svg class="a" style="left:7px;top:21px" width="12" height="12"><rect x="0.80" y="0.95" width="9.20" height="9.10" rx="0.8" fill="#fff" stroke="#c8c8c8" stroke-width="1"/></svg>
<svg class="a" style="left:1px;top:35px" width="559" height="19"><rect x="0.50" y="0.50" width="558.50" height="17.75" fill="#e9f0f6"/></svg>
<svg class="a" style="left:1px;top:52px" width="559" height="2"><rect x="0.50" y="0.65" width="558.50" height="1.00" fill="#dde5ec"/></svg>
<svg class="a" style="left:560px;top:35px" width="193" height="19"><rect x="0.00" y="0.50" width="192.30" height="17.75" fill="#8fe1ed"/></svg>
<svg class="a" style="left:622px;top:35px" width="2" height="19"><rect x="0.95" y="0.50" width="0.80" height="17.75" fill="#a4e6f0"/></svg>
<svg class="a" style="left:687px;top:35px" width="2" height="19"><rect x="0.15" y="0.50" width="1.00" height="17.75" fill="#c4eef5"/></svg>
<svg class="a" style="left:560px;top:52px" width="193" height="2"><rect x="0.00" y="0.45" width="192.30" height="0.90" fill="#b4eaf3"/></svg>
<svg class="a" style="left:22px;top:35px" width="2" height="19"><rect x="0.65" y="0.50" width="1.00" height="17.75" fill="#cbdcee"/></svg>
<svg class="a" style="left:41px;top:35px" width="2" height="19"><rect x="0.55" y="0.50" width="1.00" height="17.75" fill="#cbdcee"/></svg>
<svg class="a" style="left:7px;top:39px" width="12" height="12"><rect x="0.80" y="0.70" width="9.20" height="9.10" rx="0.8" fill="#fff" stroke="#c8c8c8" stroke-width="1"/></svg>
<svg class="a" style="left:1px;top:53px" width="559" height="18"><rect x="0.50" y="0.25" width="558.50" height="17.75" fill="#ffffff"/></svg>
<svg class="a" style="left:1px;top:70px" width="559" height="2"><rect x="0.50" y="0.40" width="558.50" height="1.00" fill="#e6ebf0"/></svg>
<svg class="a" style="left:560px;top:53px" width="193" height="18"><rect x="0.00" y="0.25" width="192.30" height="17.75" fill="#7ddbea"/></svg>
<svg class="a" style="left:622px;top:53px" width="2" height="18"><rect x="0.95" y="0.25" width="0.80" height="17.75" fill="#98e2ee"/></svg>
<svg class="a" style="left:687px;top:53px" width="2" height="18"><rect x="0.15" y="0.25" width="1.00" height="17.75" fill="#c4eef5"/></svg>
<svg class="a" style="left:560px;top:70px" width="193" height="2"><rect x="0.00" y="0.20" width="192.30" height="0.90" fill="#b4eaf3"/></svg>
<svg class="a" style="left:22px;top:53px" width="2" height="18"><rect x="0.65" y="0.25" width="1.00" height="17.75" fill="#cbdcee"/></svg>
<svg class="a" style="left:41px;top:53px" width="2" height="18"><rect x="0.55" y="0.25" width="1.00" height="17.75" fill="#cbdcee"/></svg>
<svg class="a" style="left:7px;top:56px" width="12" height="13"><rect x="0.80" y="1.45" width="9.20" height="9.10" rx="0.8" fill="#fff" stroke="#c8c8c8" stroke-width="1"/></svg>
<svg class="a" style="left:1px;top:71px" width="559" height="18"><rect x="0.50" y="0.00" width="558.50" height="17.75" fill="#e9f0f6"/></svg>
<svg class="a" style="left:1px;top:88px" width="559" height="2"><rect x="0.50" y="0.15" width="558.50" height="1.00" fill="#dde5ec"/></svg>
<svg class="a" style="left:560px;top:71px" width="193" height="18"><rect x="0.00" y="0.00" width="192.30" height="17.75" fill="#8fe1ed"/></svg>
<svg class="a" style="left:622px;top:71px" width="2" height="18"><rect x="0.95" y="0.00" width="0.80" height="17.75" fill="#a4e6f0"/></svg>
<svg class="a" style="left:687px;top:71px" width="2" height="18"><rect x="0.15" y="0.00" width="1.00" height="17.75" fill="#c4eef5"/></svg>
<svg class="a" style="left:560px;top:87px" width="193" height="2"><rect x="0.00" y="0.95" width="192.30" height="0.90" fill="#b4eaf3"/></svg>
<svg class="a" style="left:22px;top:71px" width="2" height="18"><rect x="0.65" y="0.00" width="1.00" height="17.75" fill="#cbdcee"/></svg>
<svg class="a" style="left:41px;top:71px" width="2" height="18"><rect x="0.55" y="0.00" width="1.00" height="17.75" fill="#cbdcee"/></svg>
<svg class="a" style="left:7px;top:74px" width="12" height="12"><rect x="0.80" y="1.20" width="9.20" height="9.10" rx="0.8" fill="#fff" stroke="#c8c8c8" stroke-width="1"/></svg>
<svg class="a" style="left:1px;top:88px" width="559" height="19"><rect x="0.50" y="0.75" width="558.50" height="17.75" fill="#ffffff"/></svg>
<svg class="a" style="left:1px;top:105px" width="559" height="2"><rect x="0.50" y="0.90" width="558.50" height="1.00" fill="#e6ebf0"/></svg>
<svg class="a" style="left:560px;top:88px" width="193" height="19"><rect x="0.00" y="0.75" width="192.30" height="17.75" fill="#7ddbea"/></svg>
<svg class="a" style="left:622px;top:88px" width="2" height="19"><rect x="0.95" y="0.75" width="0.80" height="17.75" fill="#98e2ee"/></svg>
<svg class="a" style="left:687px;top:88px" width="2" height="19"><rect x="0.15" y="0.75" width="1.00" height="17.75" fill="#c4eef5"/></svg>
<svg class="a" style="left:560px;top:105px" width="193" height="2"><rect x="0.00" y="0.70" width="192.30" height="0.90" fill="#b4eaf3"/></svg>
<svg class="a" style="left:22px;top:88px" width="2" height="19"><rect x="0.65" y="0.75" width="1.00" height="17.75" fill="#cbdcee"/></svg>
<svg class="a" style="left:41px;top:88px" width="2" height="19"><rect x="0.55" y="0.75" width="1.00" height="17.75" fill="#cbdcee"/></svg>
<svg class="a" style="left:7px;top:92px" width="12" height="12"><rect x="0.80" y="0.95" width="9.20" height="9.10" rx="0.8" fill="#fff" stroke="#c8c8c8" stroke-width="1"/></svg>
<svg class="a" style="left:1px;top:106px" width="559" height="19"><rect x="0.50" y="0.50" width="558.50" height="17.75" fill="#e9f0f6"/></svg>
<svg class="a" style="left:1px;top:123px" width="559" height="2"><rect x="0.50" y="0.65" width="558.50" height="1.00" fill="#dde5ec"/></svg>
<svg class="a" style="left:560px;top:106px" width="193" height="19"><rect x="0.00" y="0.50" width="192.30" height="17.75" fill="#8fe1ed"/></svg>
<svg class="a" style="left:622px;top:106px" width="2" height="19"><rect x="0.95" y="0.50" width="0.80" height="17.75" fill="#a4e6f0"/></svg>
<svg class="a" style="left:687px;top:106px" width="2" height="19"><rect x="0.15" y="0.50" width="1.00" height="17.75" fill="#c4eef5"/></svg>
<svg class="a" style="left:560px;top:123px" width="193" height="2"><rect x="0.00" y="0.45" width="192.30" height="0.90" fill="#b4eaf3"/></svg>
<svg class="a" style="left:22px;top:106px" width="2" height="19"><rect x="0.65" y="0.50" width="1.00" height="17.75" fill="#cbdcee"/></svg>
<svg class="a" style="left:41px;top:106px" width="2" height="19"><rect x="0.55" y="0.50" width="1.00" height="17.75" fill="#cbdcee"/></svg>
<svg class="a" style="left:7px;top:110px" width="12" height="12"><rect x="0.80" y="0.70" width="9.20" height="9.10" rx="0.8" fill="#fff" stroke="#c8c8c8" stroke-width="1"/></svg>
<svg class="a" style="left:1px;top:124px" width="559" height="18"><rect x="0.50" y="0.25" width="558.50" height="17.75" fill="#ffffff"/></svg>
<svg class="a" style="left:1px;top:141px" width="559" height="2"><rect x="0.50" y="0.40" width="558.50" height="1.00" fill="#e6ebf0"/></svg>
<svg class="a" style="left:560px;top:124px" width="193" height="18"><rect x="0.00" y="0.25" width="192.30" height="17.75" fill="#7ddbea"/></svg>
<svg class="a" style="left:622px;top:124px" width="2" height="18"><rect x="0.95" y="0.25" width="0.80" height="17.75" fill="#98e2ee"/></svg>
<svg class="a" style="left:687px;top:124px" width="2" height="18"><rect x="0.15" y="0.25" width="1.00" height="17.75" fill="#c4eef5"/></svg>
<svg class="a" style="left:560px;top:141px" width="193" height="2"><rect x="0.00" y="0.20" width="192.30" height="0.90" fill="#b4eaf3"/></svg>
<svg class="a" style="left:22px;top:124px" width="2" height="18"><rect x="0.65" y="0.25" width="1.00" height="17.75" fill="#cbdcee"/></svg>
<svg class="a" style="left:41px;top:124px" width="2" height="18"><rect x="0.55" y="0.25" width="1.00" height="17.75" fill="#cbdcee"/></svg>
<svg class="a" style="left:7px;top:127px" width="12" height="13"><rect x="0.80" y="1.45" width="9.20" height="9.10" rx="0.8" fill="#fff" stroke="#c8c8c8" stroke-width="1"/></svg>
<svg class="a" style="left:1px;top:142px" width="559" height="18"><rect x="0.50" y="0.00" width="558.50" height="17.75" fill="#e9f0f6"/></svg>
<svg class="a" style="left:1px;top:159px" width="559" height="2"><rect x="0.50" y="0.15" width="558.50" height="1.00" fill="#dde5ec"/></svg>
<svg class="a" style="left:560px;top:142px" width="193" height="18"><rect x="0.00" y="0.00" width="192.30" height="17.75" fill="#8fe1ed"/></svg>
<svg class="a" style="left:622px;top:142px" width="2" height="18"><rect x="0.95" y="0.00" width="0.80" height="17.75" fill="#a4e6f0"/></svg>
<svg class="a" style="left:687px;top:142px" width="2" height="18"><rect x="0.15" y="0.00" width="1.00" height="17.75" fill="#c4eef5"/></svg>
<svg class="a" style="left:560px;top:158px" width="193" height="2"><rect x="0.00" y="0.95" width="192.30" height="0.90" fill="#b4eaf3"/></svg>
<svg class="a" style="left:22px;top:142px" width="2" height="18"><rect x="0.65" y="0.00" width="1.00" height="17.75" fill="#cbdcee"/></svg>
<svg class="a" style="left:41px;top:142px" width="2" height="18"><rect x="0.55" y="0.00" width="1.00" height="17.75" fill="#cbdcee"/></svg>
<svg class="a" style="left:7px;top:145px" width="12" height="12"><rect x="0.80" y="1.20" width="9.20" height="9.10" rx="0.8" fill="#fff" stroke="#c8c8c8" stroke-width="1"/></svg>
<svg class="a" style="left:1px;top:159px" width="559" height="19"><rect x="0.50" y="0.75" width="558.50" height="17.75" fill="#ffffff"/></svg>
<svg class="a" style="left:1px;top:176px" width="559" height="2"><rect x="0.50" y="0.90" width="558.50" height="1.00" fill="#e6ebf0"/></svg>
<svg class="a" style="left:560px;top:159px" width="193" height="19"><rect x="0.00" y="0.75" width="192.30" height="17.75" fill="#7ddbea"/></svg>
<svg class="a" style="left:622px;top:159px" width="2" height="19"><rect x="0.95" y="0.75" width="0.80" height="17.75" fill="#98e2ee"/></svg>
<svg class="a" style="left:687px;top:159px" width="2" height="19"><rect x="0.15" y="0.75" width="1.00" height="17.75" fill="#c4eef5"/></svg>
<svg class="a" style="left:560px;top:176px" width="193" height="2"><rect x="0.00" y="0.70" width="192.30" height="0.90" fill="#b4eaf3"/></svg>
<svg class="a" style="left:22px;top:159px" width="2" height="19"><rect x="0.65" y="0.75" width="1.00" height="17.75" fill="#cbdcee"/></svg>
<svg class="a" style="left:41px;top:159px" width="2" height="19"><rect x="0.55" y="0.75" width="1.00" height="17.75" fill="#cbdcee"/></svg>
<svg class="a" style="left:7px;top:163px" width="12" height="12"><rect x="0.80" y="0.95" width="9.20" height="9.10" rx="0.8" fill="#fff" stroke="#c8c8c8" stroke-width="1"/></svg>
</div>
<span class="t" id="t56" style="font-size:10px;color:#222;letter-spacing:-0.515px;left:45.20px;top:184px;">000003</span>
<span class="t" id="t57" style="font-size:10px;color:#222;letter-spacing:-0.434px;left:101.70px;top:184px;">VitalGarden</span>
<span class="t" id="t58" style="font-size:10px;color:#222;letter-spacing:-0.515px;left:189.70px;top:184px;">000003</span>
<span class="t" id="t59" style="font-size:10px;color:#222;letter-spacing:-0.543px;left:249.20px;top:184px;">202-000003</span>
<span class="t" id="t60" style="font-size:10px;color:#222;letter-spacing:-0.360px;left:332.70px;top:184px;">FZKO/LUB/02/01</span>
<span class="t" id="t61" style="font-size:10px;color:#222;letter-spacing:-0.620px;left:433.40px;top:184px;">PLN</span>
<span class="t" id="t62" style="font-size:10px;color:#222;letter-spacing:-0.407px;left:459.90px;top:184px;">2020.02.17</span>
<span class="t" id="t63" style="font-size:10px;color:#222;letter-spacing:-0.360px;left:518.40px;top:184px;">P10</span>
<span class="t" id="t64" style="font-size:10px;color:#222;letter-spacing:-0.360px;right:147.96px;top:184px;">0,00</span>
<span class="t" id="t65" style="font-size:10px;color:#222;letter-spacing:-0.360px;right:84.16px;top:184px;">492,00</span>
<span class="t" id="t66" style="font-size:10px;color:#e0504d;letter-spacing:-0.360px;right:19.96px;top:184px;">-492,00</span>
<span class="t" id="t67" style="font-size:10px;color:#222;letter-spacing:-0.515px;left:45.20px;top:202px;">000003</span>
<span class="t" id="t68" style="font-size:10px;color:#222;letter-spacing:-0.434px;left:101.70px;top:202px;">VitalGarden</span>
<span class="t" id="t69" style="font-size:10px;color:#222;letter-spacing:-0.515px;left:189.70px;top:202px;">000003</span>
<span class="t" id="t70" style="font-size:10px;color:#222;letter-spacing:-0.543px;left:249.20px;top:202px;">202-000003</span>
<span class="t" id="t71" style="font-size:10px;color:#222;letter-spacing:-0.360px;left:332.70px;top:202px;">FZKO/LUB/02/02</span>
<span class="t" id="t72" style="font-size:10px;color:#222;letter-spacing:-0.620px;left:433.40px;top:202px;">PLN</span>
<span class="t" id="t73" style="font-size:10px;color:#222;letter-spacing:-0.407px;left:459.90px;top:202px;">2020.02.21</span>
<span class="t" id="t74" style="font-size:10px;color:#222;letter-spacing:-0.360px;left:518.40px;top:202px;">P10</span>
<span class="t" id="t75" style="font-size:10px;color:#222;letter-spacing:-0.360px;right:147.96px;top:202px;">0,00</span>
<span class="t" id="t76" style="font-size:10px;color:#222;letter-spacing:-0.360px;right:84.16px;top:202px;">676,50</span>
<span class="t" id="t77" style="font-size:10px;color:#e0504d;letter-spacing:-0.360px;right:19.96px;top:202px;">-676,50</span>
<span class="t" id="t78" style="font-size:10px;color:#222;letter-spacing:-0.515px;left:45.20px;top:220px;">000003</span>
<span class="t" id="t79" style="font-size:10px;color:#222;letter-spacing:-0.434px;left:101.70px;top:220px;">VitalGarden</span>
<span class="t" id="t80" style="font-size:10px;color:#222;letter-spacing:-0.515px;left:189.70px;top:220px;">000003</span>
<span class="t" id="t81" style="font-size:10px;color:#222;letter-spacing:-0.543px;left:249.20px;top:220px;">202-000003</span>
<span class="t" id="t82" style="font-size:10px;color:#222;letter-spacing:-0.360px;left:332.70px;top:220px;">FZKO/LUB/02/03</span>
<span class="t" id="t83" style="font-size:10px;color:#222;letter-spacing:-0.620px;left:433.40px;top:220px;">PLN</span>
<span class="t" id="t84" style="font-size:10px;color:#222;letter-spacing:-0.407px;left:459.90px;top:220px;">2020.02.24</span>
<span class="t" id="t85" style="font-size:10px;color:#222;letter-spacing:-0.360px;left:518.40px;top:220px;">P10</span>
<span class="t" id="t86" style="font-size:10px;color:#222;letter-spacing:-0.360px;right:147.96px;top:220px;">0,00</span>
<span class="t" id="t87" style="font-size:10px;color:#222;letter-spacing:-0.360px;right:84.16px;top:220px;">17 220,00</span>
<span class="t" id="t88" style="font-size:10px;color:#e0504d;letter-spacing:-0.360px;right:19.96px;top:220px;">-17 220,00</span>
<span class="t" id="t89" style="font-size:10px;color:#222;letter-spacing:-0.515px;left:45.20px;top:237px;">000003</span>
<span class="t" id="t90" style="font-size:10px;color:#222;letter-spacing:-0.434px;left:101.70px;top:237px;">VitalGarden</span>
<span class="t" id="t91" style="font-size:10px;color:#222;letter-spacing:-0.515px;left:189.70px;top:237px;">000003</span>
<span class="t" id="t92" style="font-size:10px;color:#222;letter-spacing:-0.543px;left:249.20px;top:237px;">202-000003</span>
<span class="t" id="t93" style="font-size:10px;color:#222;letter-spacing:-0.360px;left:332.70px;top:237px;">FZKO/1234/LUB/1</span>
<span class="t" id="t94" style="font-size:10px;color:#222;letter-spacing:-0.620px;left:433.40px;top:237px;">PLN</span>
<span class="t" id="t95" style="font-size:10px;color:#222;letter-spacing:-0.407px;left:459.90px;top:237px;">2020.02.27</span>
<span class="t" id="t96" style="font-size:10px;color:#222;letter-spacing:-0.360px;left:518.40px;top:237px;">P7</span>
<span class="t" id="t97" style="font-size:10px;color:#222;letter-spacing:-0.360px;right:147.96px;top:237px;">0,00</span>
<span class="t" id="t98" style="font-size:10px;color:#222;letter-spacing:-0.360px;right:84.16px;top:237px;">19 450,00</span>
<span class="t" id="t99" style="font-size:10px;color:#e0504d;letter-spacing:-0.360px;right:19.96px;top:237px;">-19 450,00</span>
<span class="t" id="t100" style="font-size:10px;color:#222;letter-spacing:-0.515px;left:45.20px;top:255px;">000003</span>
<span class="t" id="t101" style="font-size:10px;color:#222;letter-spacing:-0.434px;left:101.70px;top:255px;">VitalGarden</span>
<span class="t" id="t102" style="font-size:10px;color:#222;letter-spacing:-0.515px;left:189.70px;top:255px;">000003</span>
<span class="t" id="t103" style="font-size:10px;color:#222;letter-spacing:-0.543px;left:249.20px;top:255px;">202-000003</span>
<span class="t" id="t104" style="font-size:10px;color:#222;letter-spacing:-0.360px;left:332.70px;top:255px;">FZKO/1234/LUB/2</span>
<span class="t" id="t105" style="font-size:10px;color:#222;letter-spacing:-0.620px;left:433.40px;top:255px;">PLN</span>
<span class="t" id="t106" style="font-size:10px;color:#222;letter-spacing:-0.407px;left:459.90px;top:255px;">2020.02.27</span>
<span class="t" id="t107" style="font-size:10px;color:#222;letter-spacing:-0.360px;left:518.40px;top:255px;">P7</span>
<span class="t" id="t108" style="font-size:10px;color:#222;letter-spacing:-0.360px;right:147.96px;top:255px;">0,00</span>
<span class="t" id="t109" style="font-size:10px;color:#222;letter-spacing:-0.360px;right:84.16px;top:255px;">20 295,00</span>
<span class="t" id="t110" style="font-size:10px;color:#e0504d;letter-spacing:-0.360px;right:19.96px;top:255px;">-20 295,00</span>
<span class="t" id="t111" style="font-size:10px;color:#222;letter-spacing:-0.515px;left:45.20px;top:273px;">000003</span>
<span class="t" id="t112" style="font-size:10px;color:#222;letter-spacing:-0.434px;left:101.70px;top:273px;">VitalGarden</span>
<span class="t" id="t113" style="font-size:10px;color:#222;letter-spacing:-0.515px;left:189.70px;top:273px;">000003</span>
<span class="t" id="t114" style="font-size:10px;color:#222;letter-spacing:-0.543px;left:249.20px;top:273px;">202-000003</span>
<span class="t" id="t115" style="font-size:10px;color:#222;letter-spacing:-0.360px;left:332.70px;top:273px;">FZKO/LUB/02/04</span>
<span class="t" id="t116" style="font-size:10px;color:#222;letter-spacing:-0.620px;left:433.40px;top:273px;">PLN</span>
<span class="t" id="t117" style="font-size:10px;color:#222;letter-spacing:-0.407px;left:459.90px;top:273px;">2020.02.29</span>
<span class="t" id="t118" style="font-size:10px;color:#222;letter-spacing:-0.360px;left:518.40px;top:273px;">P10</span>
<span class="t" id="t119" style="font-size:10px;color:#222;letter-spacing:-0.360px;right:147.96px;top:273px;">0,00</span>
<span class="t" id="t120" style="font-size:10px;color:#222;letter-spacing:-0.360px;right:84.16px;top:273px;">18 819,00</span>
<span class="t" id="t121" style="font-size:10px;color:#e0504d;letter-spacing:-0.360px;right:19.96px;top:273px;">-18 819,00</span>
<span class="t" id="t122" style="font-size:10px;color:#222;letter-spacing:-0.515px;left:45.20px;top:291px;">000003</span>
<span class="t" id="t123" style="font-size:10px;color:#222;letter-spacing:-0.434px;left:101.70px;top:291px;">VitalGarden</span>
<span class="t" id="t124" style="font-size:10px;color:#222;letter-spacing:-0.515px;left:189.70px;top:291px;">000003</span>
<span class="t" id="t125" style="font-size:10px;color:#222;letter-spacing:-0.543px;left:249.20px;top:291px;">202-000003</span>
<span class="t" id="t126" style="font-size:10px;color:#222;letter-spacing:-0.360px;left:332.70px;top:291px;">FZKOZ/LUB/002/12</span>
<span class="t" id="t127" style="font-size:10px;color:#222;letter-spacing:-0.620px;left:433.40px;top:291px;">PLN</span>
<span class="t" id="t128" style="font-size:10px;color:#222;letter-spacing:-0.407px;left:459.90px;top:291px;">2020.03.05</span>
<span class="t" id="t129" style="font-size:10px;color:#222;letter-spacing:-0.360px;left:518.40px;top:291px;">P10</span>
<span class="t" id="t130" style="font-size:10px;color:#222;letter-spacing:-0.360px;right:147.96px;top:291px;">0,00</span>
<span class="t" id="t131" style="font-size:10px;color:#222;letter-spacing:-0.360px;right:84.16px;top:291px;">1 845,00</span>
<span class="t" id="t132" style="font-size:10px;color:#e0504d;letter-spacing:-0.360px;right:19.96px;top:291px;">-1 845,00</span>
<span class="t" id="t133" style="font-size:10px;color:#222;letter-spacing:-0.515px;left:45.20px;top:308px;">000003</span>
<span class="t" id="t134" style="font-size:10px;color:#222;letter-spacing:-0.434px;left:101.70px;top:308px;">VitalGarden</span>
<span class="t" id="t135" style="font-size:10px;color:#222;letter-spacing:-0.515px;left:189.70px;top:308px;">000003</span>
<span class="t" id="t136" style="font-size:10px;color:#222;letter-spacing:-0.543px;left:249.20px;top:308px;">202-000003</span>
<span class="t" id="t137" style="font-size:10px;color:#222;letter-spacing:-0.360px;left:332.70px;top:308px;">FZKO/SDDFG/1</span>
<span class="t" id="t138" style="font-size:10px;color:#222;letter-spacing:-0.620px;left:433.40px;top:308px;">PLN</span>
<span class="t" id="t139" style="font-size:10px;color:#222;letter-spacing:-0.407px;left:459.90px;top:308px;">2020.03.20</span>
<span class="t" id="t140" style="font-size:10px;color:#222;letter-spacing:-0.360px;left:518.40px;top:308px;">P10</span>
<span class="t" id="t141" style="font-size:10px;color:#222;letter-spacing:-0.360px;right:147.96px;top:308px;">0,00</span>
<span class="t" id="t142" style="font-size:10px;color:#222;letter-spacing:-0.360px;right:84.16px;top:308px;">3 690,00</span>
<span class="t" id="t143" style="font-size:10px;color:#e0504d;letter-spacing:-0.360px;right:19.96px;top:308px;">-3 690,00</span>
<span class="t" id="t144" style="font-size:10px;color:#222;letter-spacing:-0.515px;left:45.20px;top:326px;">000003</span>
<span class="t" id="t145" style="font-size:10px;color:#222;letter-spacing:-0.434px;left:101.70px;top:326px;">VitalGarden</span>
<span class="t" id="t146" style="font-size:10px;color:#222;letter-spacing:-0.515px;left:189.70px;top:326px;">000003</span>
<span class="t" id="t147" style="font-size:10px;color:#222;letter-spacing:-0.543px;left:249.20px;top:326px;">202-000003</span>
<span class="t" id="t148" style="font-size:10px;color:#222;letter-spacing:-0.360px;left:332.70px;top:326px;">FZKO/SDDFG/2</span>
<span class="t" id="t149" style="font-size:10px;color:#222;letter-spacing:-0.620px;left:433.40px;top:326px;">PLN</span>
<span class="t" id="t150" style="font-size:10px;color:#222;letter-spacing:-0.407px;left:459.90px;top:326px;">2020.03.20</span>
<span class="t" id="t151" style="font-size:10px;color:#222;letter-spacing:-0.360px;left:518.40px;top:326px;">P10</span>
<span class="t" id="t152" style="font-size:10px;color:#222;letter-spacing:-0.360px;right:147.96px;top:326px;">0,00</span>
<span class="t" id="t153" style="font-size:10px;color:#222;letter-spacing:-0.360px;right:84.16px;top:326px;">9 225,00</span>
<span class="t" id="t154" style="font-size:10px;color:#e0504d;letter-spacing:-0.360px;right:19.96px;top:326px;">-9 225,00</span>
<span class="t" id="t155" style="font-size:10px;color:#222;letter-spacing:-0.515px;left:45.20px;top:344px;">000003</span>
<span class="t" id="t156" style="font-size:10px;color:#222;letter-spacing:-0.434px;left:101.70px;top:344px;">VitalGarden</span>
<span class="t" id="t157" style="font-size:10px;color:#222;letter-spacing:-0.515px;left:189.70px;top:344px;">000003</span>
<span class="t" id="t158" style="font-size:10px;color:#222;letter-spacing:-0.543px;left:249.20px;top:344px;">202-000003</span>
<span class="t" id="t159" style="font-size:10px;color:#222;letter-spacing:-0.360px;left:332.70px;top:344px;">FZKO/SDDFG/3</span>
<span class="t" id="t160" style="font-size:10px;color:#222;letter-spacing:-0.620px;left:433.40px;top:344px;">PLN</span>
<span class="t" id="t161" style="font-size:10px;color:#222;letter-spacing:-0.407px;left:459.90px;top:344px;">2020.03.20</span>
<span class="t" id="t162" style="font-size:10px;color:#222;letter-spacing:-0.360px;left:518.40px;top:344px;">P10</span>
<span class="t" id="t163" style="font-size:10px;color:#222;letter-spacing:-0.360px;right:147.96px;top:344px;">0,00</span>
<span class="t" id="t164" style="font-size:10px;color:#222;letter-spacing:-0.360px;right:84.16px;top:344px;">6 150,00</span>
<span class="t" id="t165" style="font-size:10px;color:#e0504d;letter-spacing:-0.360px;right:19.96px;top:344px;">-6 150,00</span>
<svg class="a" style="left:326px;top:232px" width="108" height="24"><rect x="4.3" y="4.05" width="99" height="14.9" fill="none" stroke="#1b7dc5" stroke-width="1.7"/></svg>
<svg class="a" style="left:752px;top:181px" width="4" height="172"><rect x="0.40" y="0.50" width="3.40" height="171.50" fill="#d7d7d7"/></svg>
<svg class="a" style="left:755px;top:141px" width="13" height="212"><rect x="0.50" y="0.00" width="12.00" height="212.00" fill="#fff"/></svg>
<svg class="a" style="left:754px;top:141px" width="2" height="40"><rect x="0.85" y="0.00" width="1.00" height="40.00" fill="#dcdcdc"/></svg>
<svg class="a" style="left:755px;top:141px" width="12" height="40"><rect x="0.50" y="0.00" width="11.50" height="40.00" fill="#f4f4f4"/></svg>
<svg class="a" style="left:758px;top:156.8px" width="7" height="9" viewBox="0 0 7 9"><path d="M5.4 0.9 L1.5 4.5 L5.4 8.1" fill="none" stroke="#2d7cc8" stroke-width="1.1"/></svg>
<svg class="a" style="left:757.5px;top:185px" width="8" height="6" viewBox="0 0 8 6"><path d="M1.2 4.4 L4 1.3 L6.8 4.4" fill="none" stroke="#b5b5b5" stroke-width="0.9"/></svg>
<svg class="a" style="left:757.5px;top:344.8px" width="8" height="6" viewBox="0 0 8 6"><path d="M1.2 1.4 L4 4.5 L6.8 1.4" fill="none" stroke="#b5b5b5" stroke-width="0.9"/></svg>
<svg class="a" style="left:758px;top:210px" width="7" height="36"><rect x="0.60" y="0.60" width="5.80" height="35.00" fill="#b2b2b2"/></svg>
<svg class="a" style="left:1px;top:353px" width="767" height="11"><rect x="0.30" y="0.00" width="766.00" height="11.00" fill="#fff"/></svg>
<svg class="a" style="left:1px;top:353px" width="767" height="1"><rect x="0.50" y="0.00" width="766.00" height="1.00" fill="#e2e2e2"/></svg>
<svg class="a" style="left:4px;top:355.5px" width="6" height="7" viewBox="0 0 6 7"><path d="M4.6 0.8 L1.2 3.5 L4.6 6.2" fill="none" stroke="#a0a0a0" stroke-width="1"/></svg>
<svg class="a" style="left:747.5px;top:355.5px" width="6" height="7" viewBox="0 0 6 7"><path d="M1.2 0.8 L4.6 3.5 L1.2 6.2" fill="none" stroke="#a0a0a0" stroke-width="1"/></svg>
<svg class="a" style="left:11px;top:356px" width="271" height="6"><rect x="0.70" y="0.70" width="270.00" height="4.60" fill="#bdbdbd"/></svg>
<svg class="a" style="left:1px;top:363px" width="766" height="5"><rect x="0.20" y="0.70" width="765.60" height="3.60" fill="#c9c9c9"/></svg>
<svg class="a" style="left:379px;top:364px" width="10" height="2"><rect x="0.50" y="0.80" width="9.50" height="1.20" fill="#f4f4f4"/></svg>
<svg class="a" style="left:1px;top:367px" width="766" height="22"><rect x="0.20" y="0.30" width="765.60" height="21.00" fill="#ececec"/></svg>
<svg class="a" style="left:1px;top:388px" width="766" height="2"><rect x="0.20" y="0.20" width="765.60" height="1.00" fill="#d2d2d2"/></svg>
<svg class="a" style="left:5.5px;top:372.5px" width="14" height="13" viewBox="0 0 14 13"><path d="M0.8 0.5 L0.8 12.2 L13 12.2" fill="none" stroke="#7a8ea6" stroke-width="1.2"/><rect x="1.4" y="8.4" width="5" height="3.4" fill="#2f6fb7"/><rect x="7" y="9.4" width="2.4" height="1.6" fill="#9a9a9a"/><rect x="10" y="9.4" width="2.4" height="1.6" fill="#9a9a9a"/><circle cx="8.6" cy="3.6" r="2.7" fill="#fff" stroke="#2f6fb7" stroke-width="1.2"/><path d="M10.4 5.6 L12.4 7.8" stroke="#2f6fb7" stroke-width="1.3"/></svg>
<span class="t" id="t166" style="font-size:10px;color:#222;letter-spacing:-0.511px;left:22.70px;top:372px;">Przelewy</span>
<svg class="a" style="left:63px;top:376px" width="8" height="6" viewBox="0 0 8 6"><path d="M0.8 1 L3.7 4 L6.6 1" fill="none" stroke="#2c2c2c" stroke-width="1.4"/></svg>
<div class="a" style="left:77.5px;top:370px;width:56px;height:19px;background:#fff;border-top:2px solid #2b8fd2;border-right:1px solid #d2d2d2;"></div>
<span class="t" id="t167" style="font-size:10px;color:#1a7fc4;letter-spacing:-0.620px;font-weight:bold;left:86.00px;top:374px;">Przelewy</span>
<div class="a" style="left:133.5px;top:370.7px;width:101px;height:18px;background:#fff;border:1px solid #d6d6d6;border-left:none;"></div>
<span class="t" id="t168" style="font-size:10px;color:#6a6a6a;letter-spacing:-0.409px;left:142.20px;top:373px;">Przelewy wg statusu</span>
<div class="a" style="left:234.5px;top:370.7px;width:128px;height:18px;background:#fff;border:1px solid #d6d6d6;border-left:none;border-radius:0 2px 0 0;"></div>
<span class="t" id="t169" style="font-size:10px;color:#6a6a6a;letter-spacing:-0.421px;left:244.00px;top:373px;">Przelewy wg statusu-sumy</span>
<svg class="a" style="left:5px;top:394.6px" width="15" height="15" viewBox="0 0 15 15"><rect x="3.1" y="0.9" width="7.8" height="4" rx="1.3" fill="#eef3f9" stroke="#8d9196" stroke-width="0.9"/><rect x="3" y="2.9" width="8" height="3.7" fill="#3b70c0"/><path d="M0 5.3 Q0 4.3 1 4.3 L3 4.3 L3 6.6 L11 6.6 L11 4.3 L13 4.3 Q14 4.3 14 5.3 L14 10.6 L0 10.6 Z" fill="#797e84"/><rect x="4" y="9" width="6.4" height="5.2" rx="0.8" fill="#e8eef6" stroke="#8d9196" stroke-width="0.8"/><rect x="5.7" y="10.5" width="3" height="2.2" fill="#a4c2e6"/></svg>
<svg class="a" style="left:24.5px;top:399.4px" width="8" height="5" viewBox="0 0 8 5"><path d="M1.1 1 L3.6 3.5 L6.1 1" fill="none" stroke="#3d6eb0" stroke-width="1.05"/></svg>
<svg class="a" style="left:615.7px;top:394.5px" width="14" height="14" viewBox="0 0 14 14"><path d="M0.6 0.5 L0.6 13.2 L13.4 13.2" fill="none" stroke="#a4a4a4" stroke-width="1"/><rect x="1.7" y="6.7" width="3.1" height="6" fill="#5db56a"/><rect x="5.3" y="1.5" width="3.7" height="11.2" fill="#f2b81f"/><rect x="9.5" y="4" width="3.6" height="8.7" fill="#7b4fc0"/></svg>
<svg class="a" style="left:633px;top:399.2px" width="8" height="5" viewBox="0 0 8 5"><path d="M1.1 1 L3.6 3.5 L6.1 1" fill="none" stroke="#3d6eb0" stroke-width="1.05"/></svg>
<svg class="a" style="left:648.5px;top:395px" width="15" height="14" viewBox="0 0 15 14"><rect x="0.6" y="0.6" width="12" height="10.6" rx="0.8" fill="#fff" stroke="#7a7a7a" stroke-width="1"/><rect x="0.3" y="0.3" width="12.6" height="2.4" rx="0.6" fill="#3b78be"/><path d="M8 1.5 L11.6 1.5" stroke="#dfe9f5" stroke-width="0.8" stroke-dasharray="0.8 0.7"/><circle cx="10" cy="9" r="2.9" fill="#fff" stroke="#2f6fb7" stroke-width="1.2"/><path d="M8 11 L6 13.2" stroke="#2f6fb7" stroke-width="1.4" stroke-linecap="round"/></svg>
<span class="t" id="t170" style="font-size:10px;color:#222;letter-spacing:-0.584px;left:665.00px;top:395px;">Podgląd</span>
<svg class="a" style="left:709.5px;top:394.5px" width="15" height="15" viewBox="0 0 15 15"><path d="M2.2 6.6 A5.3 5.3 0 0 1 11.6 4.2" fill="none" stroke="#35a853" stroke-width="1.9"/><path d="M12.8 8.4 A5.3 5.3 0 0 1 3.4 10.8" fill="none" stroke="#35a853" stroke-width="1.9"/><path d="M13.6 1.4 L13.4 6.2 L9 5.2 Z" fill="#35a853"/><path d="M1.4 13.6 L1.6 8.8 L6 9.8 Z" fill="#35a853"/></svg>
<svg class="a" style="left:736px;top:397px" width="2" height="10"><rect x="0.75" y="0.00" width="1.00" height="10.00" fill="#b8b8b8"/></svg>
<svg class="a" style="left:747px;top:395.3px" width="15" height="13" viewBox="0 0 15 13"><circle cx="4.9" cy="4.8" r="3.6" fill="#fff" stroke="#3b7cc4" stroke-width="1.05"/><path d="M7.4 7.6 L10.2 11.4" stroke="#3b7cc4" stroke-width="1.5" stroke-linecap="round"/><path d="M9.2 0.9 L13.6 0.9 M10 2.8 L13.6 2.8 M10.2 4.7 L13 4.7" stroke="#8aa7c9" stroke-width="0.9"/></svg>
<div class="a" style="left:729.7px;top:407.5px;width:17px;height:8px;background:#f1f1f1;border:1px solid #cfcfcf;border-radius:3px 3px 0 0;border-bottom:none;"></div>
<svg class="a" style="left:733.8px;top:409.3px" width="9" height="5" viewBox="0 0 9 5"><path d="M1 0.8 L4.5 4 L8 0.8" fill="none" stroke="#2d6cb3" stroke-width="1.3"/></svg>
<svg class="a" style="left:1px;top:415px" width="767" height="41"><rect x="0.50" y="0.00" width="766.00" height="40.50" fill="#f4f4f4"/></svg>
<svg class="a" style="left:1px;top:414px" width="767" height="2"><rect x="0.50" y="0.50" width="766.00" height="1.00" fill="#d8d8d8"/></svg>
<svg class="a" style="left:348px;top:428px" width="58" height="28"><rect x="0.00" y="0.50" width="58.00" height="27.00" fill="#e9e9e9"/></svg>
<svg class="a" style="left:23px;top:428px" width="113" height="1"><rect x="0.00" y="0.00" width="112.50" height="1.00" fill="#dcdcdc"/></svg>
<svg class="a" style="left:135px;top:428px" width="90" height="1"><rect x="0.50" y="0.00" width="89.00" height="1.00" fill="#dcdcdc"/></svg>
<svg class="a" style="left:224px;top:428px" width="89" height="1"><rect x="0.50" y="0.00" width="88.00" height="1.00" fill="#dcdcdc"/></svg>
<svg class="a" style="left:312px;top:428px" width="94" height="1"><rect x="0.50" y="0.00" width="93.50" height="1.00" fill="#dcdcdc"/></svg>
<svg class="a" style="left:479px;top:428px" width="146" height="1"><rect x="0.50" y="0.00" width="145.10" height="1.00" fill="#dcdcdc"/></svg>
<svg class="a" style="left:624px;top:428px" width="75" height="1"><rect x="0.60" y="0.00" width="74.20" height="1.00" fill="#dcdcdc"/></svg>
<svg class="a" style="left:698px;top:428px" width="58" height="1"><rect x="0.80" y="0.00" width="57.20" height="1.00" fill="#dcdcdc"/></svg>
<svg class="a" style="left:22px;top:415px" width="2" height="41"><rect x="0.55" y="0.00" width="1.00" height="40.50" fill="#dcdcdc"/></svg>
<svg class="a" style="left:135px;top:415px" width="2" height="41"><rect x="0.05" y="0.00" width="1.00" height="40.50" fill="#dcdcdc"/></svg>
<svg class="a" style="left:190px;top:428px" width="2" height="28"><rect x="0.05" y="0.00" width="1.00" height="27.50" fill="#dcdcdc"/></svg>
<svg class="a" style="left:224px;top:415px" width="2" height="41"><rect x="0.05" y="0.00" width="1.00" height="40.50" fill="#dcdcdc"/></svg>
<svg class="a" style="left:261px;top:428px" width="2" height="28"><rect x="0.25" y="0.00" width="1.00" height="27.50" fill="#dcdcdc"/></svg>
<svg class="a" style="left:285px;top:428px" width="2" height="28"><rect x="0.05" y="0.00" width="1.00" height="27.50" fill="#dcdcdc"/></svg>
<svg class="a" style="left:312px;top:415px" width="2" height="41"><rect x="0.05" y="0.00" width="1.00" height="40.50" fill="#dcdcdc"/></svg>
<svg class="a" style="left:347px;top:428px" width="2" height="28"><rect x="0.55" y="0.00" width="1.00" height="27.50" fill="#dcdcdc"/></svg>
<svg class="a" style="left:405px;top:415px" width="2" height="41"><rect x="0.55" y="0.00" width="1.00" height="40.50" fill="#dcdcdc"/></svg>
<svg class="a" style="left:479px;top:415px" width="2" height="41"><rect x="0.05" y="0.00" width="1.00" height="40.50" fill="#dcdcdc"/></svg>
<svg class="a" style="left:497px;top:428px" width="2" height="28"><rect x="0.05" y="0.00" width="1.00" height="27.50" fill="#dcdcdc"/></svg>
<svg class="a" style="left:550px;top:428px" width="2" height="28"><rect x="0.85" y="0.00" width="1.00" height="27.50" fill="#dcdcdc"/></svg>
<svg class="a" style="left:624px;top:415px" width="2" height="41"><rect x="0.15" y="0.00" width="1.00" height="40.50" fill="#dcdcdc"/></svg>
<svg class="a" style="left:643px;top:428px" width="2" height="28"><rect x="0.55" y="0.00" width="1.00" height="27.50" fill="#dcdcdc"/></svg>
<svg class="a" style="left:698px;top:415px" width="2" height="41"><rect x="0.35" y="0.00" width="1.00" height="40.50" fill="#dcdcdc"/></svg>
<svg class="a" style="left:755px;top:415px" width="2" height="41"><rect x="0.55" y="0.00" width="1.00" height="40.50" fill="#dcdcdc"/></svg>
<span class="t" id="t171" style="font-size:9.2px;color:#222;letter-spacing:-0.620px;font-weight:bold;left:23.50px;top:429px;">Opis</span>
<span class="t" id="t172" style="font-size:9.2px;color:#222;letter-spacing:-0.620px;font-weight:bold;left:138.90px;top:415px;">Kwota</span>
<span class="t" id="t173" style="font-size:9.2px;color:#222;letter-spacing:-0.620px;font-weight:bold;left:138.90px;top:429px;">Wn</span>
<span class="t" id="t174" style="font-size:9.2px;color:#222;letter-spacing:-0.620px;font-weight:bold;left:194.70px;top:429px;">Ma</span>
<span class="t" id="t175" style="font-size:9.2px;color:#222;letter-spacing:-0.356px;font-weight:bold;left:227.90px;top:415px;">Waluta</span>
<span class="t" id="t176" style="font-size:9.2px;color:#222;letter-spacing:-0.537px;font-weight:bold;left:227.90px;top:429px;">Symbol</span>
<span class="t" id="t177" style="font-size:9.2px;color:#222;letter-spacing:-0.620px;font-weight:bold;left:265.20px;top:429px;">Kurs</span>
<span class="t" id="t178" style="font-size:9.2px;color:#222;letter-spacing:-0.484px;font-weight:bold;left:289.70px;top:429px;">Baza</span>
<span class="t" id="t179" style="font-size:9.2px;color:#222;letter-spacing:-0.451px;font-weight:bold;left:316.70px;top:415px;">Do banku</span>
<span class="t" id="t180" style="font-size:9.2px;color:#222;letter-spacing:-0.279px;font-weight:bold;left:316.70px;top:429px;">Status</span>
<span class="t" id="t181" style="font-size:9.2px;color:#222;letter-spacing:-0.620px;font-weight:bold;left:351.50px;top:429px;">Opis</span>
<span class="t" id="t182" style="font-size:9.2px;color:#222;letter-spacing:-0.489px;font-weight:bold;left:409.20px;top:415px;">Rachunek</span>
<span class="t" id="t183" style="font-size:9.2px;color:#222;letter-spacing:-0.241px;font-weight:bold;left:483.40px;top:415px;">Biała lista</span>
<span class="t" id="t184" style="font-size:9.2px;color:#222;letter-spacing:-0.620px;font-weight:bold;left:502.20px;top:429px;">Data</span>
<span class="t" id="t185" style="font-size:9.2px;color:#222;letter-spacing:-0.620px;font-weight:bold;left:556.00px;top:429px;">Opis</span>
<span class="t" id="t186" style="font-size:9.2px;color:#222;letter-spacing:-0.380px;font-weight:bold;left:628.20px;top:415px;">Czynny podatnik</span>
<span class="t" id="t187" style="font-size:9.2px;color:#222;letter-spacing:-0.474px;font-weight:bold;left:647.20px;top:429px;">Data</span>
<span class="t" id="t188" style="font-size:9.2px;color:#222;letter-spacing:-0.253px;font-weight:bold;left:701.50px;top:415px;">Przelew</span>
<span class="t" id="t189" style="font-size:9.2px;color:#222;letter-spacing:-0.378px;font-weight:bold;left:701.50px;top:429px;">Typ</span>
<svg class="a" style="left:758.3px;top:430.5px" width="7" height="9" viewBox="0 0 7 9"><path d="M5.4 0.9 L1.5 4.5 L5.4 8.1" fill="none" stroke="#2d7cc8" stroke-width="1.1"/></svg>
<svg class="a" style="left:7px;top:443px" width="11" height="11"><rect x="0.50" y="0.60" width="8.80" height="8.60" rx="0.8" fill="#fff" stroke="#c2c2c2" stroke-width="1"/></svg>
<svg class="a" style="left:1px;top:455px" width="767" height="18"><rect x="0.50" y="0.50" width="766.00" height="17.50" fill="#ffffff"/></svg>
<svg class="a" style="left:135px;top:455px" width="90" height="18"><rect x="0.50" y="0.50" width="89.00" height="17.50" fill="#7ddbea"/></svg>
<svg class="a" style="left:189px;top:455px" width="2" height="18"><rect x="0.75" y="0.50" width="1.00" height="17.50" fill="#b4eaf3"/></svg>
<svg class="a" style="left:262px;top:455px" width="52" height="18"><rect x="0.30" y="0.50" width="51.00" height="17.50" fill="#e4ee9e"/></svg>
<div class="a" style="left:7px;top:459.5px;width:10.2px;height:10.2px;background:#fff;border:1px solid #c9c9c9;border-radius:1px;"></div>
<span class="t" id="t190" style="font-size:10px;color:#1a1a1a;letter-spacing:-0.576px;left:23.50px;top:458px;width:109.3px;overflow:hidden;">ZAPŁATA ZA:FZKO/1234/LUB/1</span>
<span class="t" id="t191" style="font-size:10px;color:#1a1a1a;letter-spacing:-0.360px;right:581.36px;top:458px;">18 450,00</span>
<span class="t" id="t192" style="font-size:10px;color:#1a1a1a;letter-spacing:-0.360px;right:547.16px;top:458px;">0,00</span>
<span class="t" id="t193" style="font-size:10px;color:#1a1a1a;letter-spacing:-0.620px;left:227.70px;top:458px;">PLN</span>
<span class="t" id="t194" style="font-size:10px;color:#1a1a1a;letter-spacing:-0.360px;right:486.36px;top:458px;">1</span>
<span class="t" id="t195" style="font-size:10px;color:#1a1a1a;letter-spacing:-0.360px;right:459.16px;top:458px;">1</span>
<span class="t" id="t196" style="font-size:10px;color:#1a1a1a;letter-spacing:-0.360px;right:423.36px;top:458px;">2</span>
<span class="t" id="t197" style="font-size:10px;color:#1a1a1a;letter-spacing:-0.620px;left:351.50px;top:458px;">Wysłane</span>
<span class="t" id="t198" style="font-size:10px;color:#1a1a1a;letter-spacing:-0.397px;left:409.20px;top:458px;">5615401131460</span>
<div class="a" style="left:485px;top:459.5px;width:10px;height:10px;background:#fff;border:1px solid #c9c9c9;border-radius:1px;"></div>
<span class="t" id="t199" style="font-size:10px;color:#1a1a1a;letter-spacing:-0.507px;left:502.20px;top:458px;">2020.03.16</span>
<span class="t" id="t200" style="font-size:10px;color:#1a1a1a;letter-spacing:-0.526px;left:556.00px;top:458px;">Rachunku [5615</span>
<div class="a" style="left:630.5px;top:459.5px;width:9.8px;height:10px;background:#fff;border:1px solid #c9c9c9;border-radius:1px;"></div>
<span class="t" id="t201" style="font-size:10px;color:#1a1a1a;letter-spacing:-0.418px;left:647.20px;top:458px;">2020.03.16</span>
<span class="t" id="t202" style="font-size:10px;color:#1a1a1a;letter-spacing:-0.484px;left:701.50px;top:458px;">Przelew zwykły</span>
<svg class="a" style="left:1px;top:473px" width="767" height="19"><rect x="0.50" y="0.00" width="766.00" height="18.20" fill="#e9f0f6"/></svg>
<svg class="a" style="left:135px;top:473px" width="90" height="19"><rect x="0.50" y="0.00" width="89.00" height="18.20" fill="#8fe1ed"/></svg>
<svg class="a" style="left:189px;top:473px" width="2" height="19"><rect x="0.75" y="0.00" width="1.00" height="18.20" fill="#b4eaf3"/></svg>
<svg class="a" style="left:262px;top:473px" width="52" height="19"><rect x="0.30" y="0.00" width="51.00" height="18.20" fill="#e1ea9c"/></svg>
<div class="a" style="left:7px;top:477.0px;width:10.2px;height:10.2px;background:#fff;border:1px solid #c9c9c9;border-radius:1px;"></div>
<span class="t" id="t203" style="font-size:10px;color:#1a1a1a;letter-spacing:-0.576px;left:23.50px;top:476px;width:109.3px;overflow:hidden;">ZAPŁATA ZA:FZKO/1234/LUB/1</span>
<span class="t" id="t204" style="font-size:10px;color:#1a1a1a;letter-spacing:-0.360px;right:581.36px;top:476px;">1 000,00</span>
<span class="t" id="t205" style="font-size:10px;color:#1a1a1a;letter-spacing:-0.360px;right:547.16px;top:476px;">0,00</span>
<span class="t" id="t206" style="font-size:10px;color:#1a1a1a;letter-spacing:-0.620px;left:227.70px;top:476px;">PLN</span>
<span class="t" id="t207" style="font-size:10px;color:#1a1a1a;letter-spacing:-0.360px;right:486.36px;top:476px;">1</span>
<span class="t" id="t208" style="font-size:10px;color:#1a1a1a;letter-spacing:-0.360px;right:459.16px;top:476px;">1</span>
<span class="t" id="t209" style="font-size:10px;color:#1a1a1a;letter-spacing:-0.360px;right:423.36px;top:476px;">0</span>
<span class="t" id="t210" style="font-size:10px;color:#1a1a1a;letter-spacing:-0.442px;left:351.50px;top:476px;">Nie wysłane</span>
<span class="t" id="t211" style="font-size:10px;color:#1a1a1a;letter-spacing:-0.397px;left:409.20px;top:476px;">5615401131460</span>
<div class="a" style="left:485px;top:477.0px;width:10px;height:10px;background:#fff;border:1px solid #c9c9c9;border-radius:1px;"></div>
<svg class="a" style="left:485px;top:476px" width="12" height="12" viewBox="0 0 12 12"><path d="M2.2 5.9 L5.3 8.3 L10.6 1.9" fill="none" stroke="#18a0e6" stroke-width="2.1" stroke-linejoin="round"/></svg>
<span class="t" id="t212" style="font-size:10px;color:#1a1a1a;letter-spacing:-0.507px;left:502.20px;top:476px;">2020.03.03</span>
<span class="t" id="t213" style="font-size:10px;color:#1a1a1a;letter-spacing:-0.526px;left:556.00px;top:476px;">Rachunek [5615</span>
<div class="a" style="left:630.5px;top:477.0px;width:9.8px;height:10px;background:#fff;border:1px solid #c9c9c9;border-radius:1px;"></div>
<span class="t" id="t214" style="font-size:10px;color:#1a1a1a;letter-spacing:-0.418px;left:647.20px;top:476px;">2020.03.03</span>
<span class="t" id="t215" style="font-size:10px;color:#1a1a1a;letter-spacing:-0.484px;left:701.50px;top:476px;">Przelew zwykły</span>
<svg class="a" style="left:1px;top:455px" width="767" height="2"><rect x="0.50" y="0.30" width="766.00" height="1.70" fill="#1b7fc6"/></svg>
<svg class="a" style="left:1px;top:471px" width="767" height="3"><rect x="0.50" y="0.50" width="766.00" height="1.70" fill="#1b7fc6"/></svg>
<svg class="a" style="left:1px;top:490px" width="767" height="2"><rect x="0.50" y="0.80" width="766.00" height="0.80" fill="#dde5ec"/></svg>
<svg class="a" style="left:400px;top:410px" width="368" height="90"><rect x="4.5" y="5" width="361" height="80.8" rx="4" fill="none" stroke="#f8323b" stroke-width="2"/></svg>
<svg class="a" style="left:1px;top:516px" width="767" height="2"><rect x="0.50" y="0.80" width="766.00" height="1.00" fill="#dcdcdc"/></svg>
<svg class="a" style="left:4px;top:519.3px" width="6" height="7" viewBox="0 0 6 7"><path d="M4.6 0.8 L1.2 3.5 L4.6 6.2" fill="none" stroke="#a0a0a0" stroke-width="1"/></svg>
<svg class="a" style="left:759px;top:519.3px" width="6" height="7" viewBox="0 0 6 7"><path d="M1.2 0.8 L4.6 3.5 L1.2 6.2" fill="none" stroke="#a0a0a0" stroke-width="1"/></svg>
<svg class="a" style="left:191px;top:520px" width="384" height="6"><rect x="0.30" y="0.00" width="383.00" height="5.50" fill="#bdbdbd"/></svg>
<div class="a" style="left:0px;top:528.9px;width:768px;height:1.1px;background:linear-gradient(90deg,#2f86c9 0%,#2f8fd0 20%,#2ba3de 55%,#2aa6e1 100%);"></div>
<svg class="a" style="left:766px;top:34px" width="2" height="496"><rect x="0.60" y="0.00" width="1.40" height="496.00" fill="#35a8e2"/></svg>
</div>
</body></html>
